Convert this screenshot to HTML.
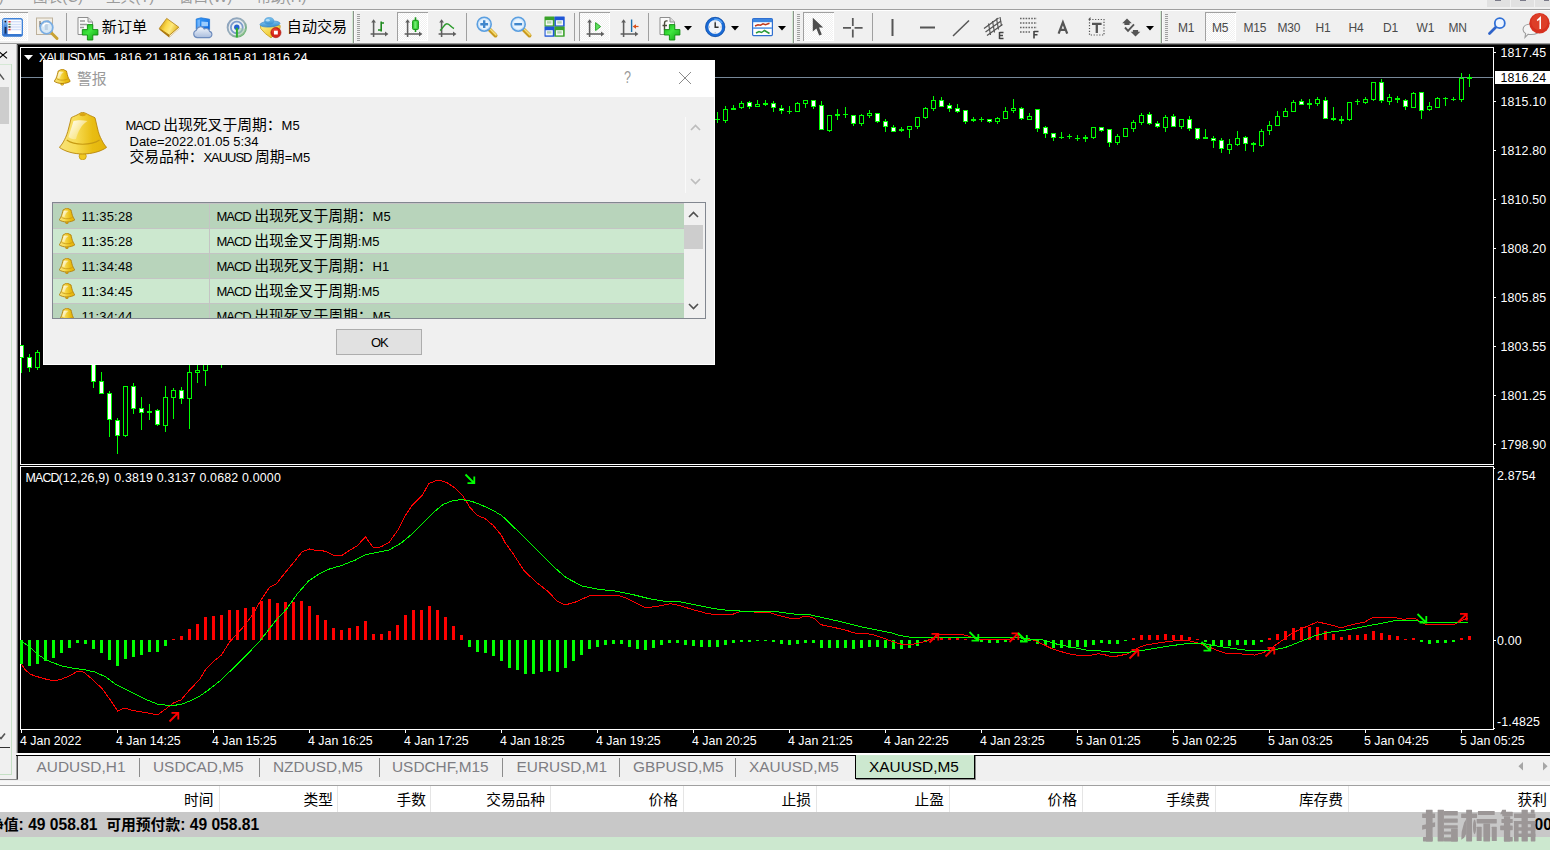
<!DOCTYPE html>
<html lang="zh"><head><meta charset="utf-8"><title>MetaTrader 4 - XAUUSD,M5</title><style>
html,body{margin:0;padding:0;background:#f0f0f0;}
body{width:1550px;height:850px;overflow:hidden;position:relative;font-family:"Liberation Sans","Noto Sans CJK SC",sans-serif;}
#app{position:absolute;left:0;top:0;width:1550px;height:850px;overflow:hidden;}
.r,.a,.t{position:absolute;}
.t{white-space:pre;}
svg{display:block;overflow:visible}
.t svg{display:inline-block;}
</style></head><body><svg width="0" height="0" style="position:absolute"><defs><linearGradient id="pg" x1="0" y1="0" x2="1" y2="1"><stop offset="0" stop-color="#17b317"/><stop offset=".45" stop-color="#3fe63f"/><stop offset="1" stop-color="#0fa00f"/></linearGradient><linearGradient id="bg1" x1="0" x2="1" y1="0" y2="0"><stop offset="0" stop-color="#f8e27a"/><stop offset=".35" stop-color="#f7dc55"/><stop offset=".7" stop-color="#e9bd12"/><stop offset="1" stop-color="#e3b30a"/></linearGradient><linearGradient id="bg2" x1="0" x2="1" y1="0" y2="1"><stop offset="0" stop-color="#fff" stop-opacity=".95"/><stop offset="1" stop-color="#fff" stop-opacity="0"/></linearGradient><symbol id="bell" viewBox="0 0 48 48"><circle cx="23.7" cy="44.2" r="3.6" fill="#f0c820" stroke="#c89a10" stroke-width=".8"/><path d="M23.5 0.4C21.5 0.6 20 2 18 3 16 4 13 5 12.2 5.8 11.5 9 10.5 13 9.7 16 8.5 21 7 25 5.6 27.5 4 31 2 33.5 0.4 35.4 6 39.5 15 42 23.7 42 32.5 42 42 39.5 47.6 35.4 46 33.5 44 31 42.5 27.5 41 25 39.5 21 38.4 16 37.7 13 36.8 9 36 5.8 35 5 32 4 30 3 28 2 26 0.6 23.5 0.4Z" fill="url(#bg1)" stroke="#b8860b" stroke-width=".9"/><path d="M7.7 28C12 31 18 32.2 23.7 32.2 29.5 32.2 36 31 40.6 28" fill="none" stroke="#c79a12" stroke-width="1.1"/><path d="M14.5 9C18 8 24 8 28.5 9 22 13 19 20 17 27 14 28 11 26.5 9.5 25 11 20 13 14 14.5 9Z" fill="url(#bg2)"/><ellipse cx="23.6" cy="2.6" rx="3.2" ry="1.6" fill="#d9a514"/></symbol><symbol id="bells" viewBox="0 0 48 48"><circle cx="23.7" cy="44.2" r="3.6" fill="#f0c820" stroke="#b07c08" stroke-width="2.2"/><path d="M23.5 0.4C21.5 0.6 20 2 18 3 16 4 13 5 12.2 5.8 11.5 9 10.5 13 9.7 16 8.5 21 7 25 5.6 27.5 4 31 2 33.5 0.4 35.4 6 39.5 15 42 23.7 42 32.5 42 42 39.5 47.6 35.4 46 33.5 44 31 42.5 27.5 41 25 39.5 21 38.4 16 37.7 13 36.8 9 36 5.8 35 5 32 4 30 3 28 2 26 0.6 23.5 0.4Z" fill="url(#bg1)" stroke="#b07c08" stroke-width="2.6"/><path d="M7.7 28C12 31 18 32.2 23.7 32.2 29.5 32.2 36 31 40.6 28" fill="none" stroke="#c08c10" stroke-width="2"/><path d="M14.5 9C18 8 24 8 28.5 9 22 13 19 20 17 27 14 28 11 26.5 9.5 25 11 20 13 14 14.5 9Z" fill="url(#bg2)"/><ellipse cx="23.6" cy="2.6" rx="3.2" ry="1.6" fill="#d9a514"/></symbol></defs></svg><div id="app">
<div class="r" style="left:0px;top:0px;width:1550px;height:850px;background:#f0f0f0;"></div>
<div class="t" style="top:-13.2px;font-size:15px;line-height:19px;color:#9b9b9b;left:-10.5px;">(I)</div>
<div class="t" style="top:-13.2px;font-size:15px;line-height:19px;color:#9b9b9b;left:33px;"><span style="font-size:14.6px">图表</span>(C)</div>
<div class="t" style="top:-13.2px;font-size:15px;line-height:19px;color:#9b9b9b;left:106px;"><span style="font-size:14.6px">工具</span>(T)</div>
<div class="t" style="top:-13.2px;font-size:15px;line-height:19px;color:#9b9b9b;left:179px;"><span style="font-size:14.6px">窗口</span>(W)</div>
<div class="t" style="top:-13.2px;font-size:15px;line-height:19px;color:#9b9b9b;left:256.5px;"><span style="font-size:14.6px">帮助</span>(H)</div>
<div class="r" style="left:1487px;top:0px;width:23px;height:7px;background:#e1e1e1;"></div>
<div class="r" style="left:1511px;top:0px;width:23px;height:7px;background:#e1e1e1;"></div>
<div class="r" style="left:1535px;top:0px;width:15px;height:7px;background:#e1e1e1;"></div>
<div class="r" style="left:1495px;top:0px;width:6px;height:1px;background:#7a7a88;"></div>
<div class="r" style="left:1520px;top:0px;width:6px;height:1px;background:#7a7a88;"></div>
<div class="r" style="left:1544px;top:0px;width:5px;height:1px;background:#7a7a88;"></div>
<div class="r" style="left:0px;top:9px;width:1550px;height:1px;background:#a0a0a0;"></div>
<div class="r" style="left:0px;top:10px;width:1550px;height:1px;background:#ffffff;"></div>
<div class="r" style="left:-1px;top:12px;width:29px;height:29px;background:#fafafa;background-image:repeating-conic-gradient(#fff 0 25%,#f0f0f0 0 50%);background-size:2px 2px;box-shadow:inset 1px 1px 0 #a0a0a0, inset -1px -1px 0 #fff;"></div>
<div class="r" style="left:66px;top:13px;width:1px;height:28px;background:#a0a0a0;"></div>
<div class="r" style="left:466px;top:13px;width:1px;height:28px;background:#a0a0a0;"></div>
<div class="r" style="left:574px;top:13px;width:1px;height:28px;background:#a0a0a0;"></div>
<div class="r" style="left:648px;top:13px;width:1px;height:28px;background:#a0a0a0;"></div>
<div class="r" style="left:872px;top:13px;width:1px;height:28px;background:#a0a0a0;"></div>
<div class="r" style="left:352px;top:11px;width:1px;height:32px;background:#cfe8cf;"></div>
<div class="r" style="left:353px;top:11px;width:1px;height:32px;background:#8d938d;"></div>
<div class="r" style="left:354px;top:11px;width:1px;height:32px;background:#fafafa;"></div>
<div class="r" style="left:357px;top:14px;width:3px;height:27px;background:transparent;background-image:repeating-linear-gradient(#a0a0a0 0 1px,transparent 1px 2px);"></div>
<div class="r" style="left:792px;top:11px;width:1px;height:32px;background:#cfe8cf;"></div>
<div class="r" style="left:793px;top:11px;width:1px;height:32px;background:#8d938d;"></div>
<div class="r" style="left:794px;top:11px;width:1px;height:32px;background:#fafafa;"></div>
<div class="r" style="left:797px;top:14px;width:3px;height:27px;background:transparent;background-image:repeating-linear-gradient(#a0a0a0 0 1px,transparent 1px 2px);"></div>
<div class="r" style="left:1160px;top:11px;width:1px;height:32px;background:#cfe8cf;"></div>
<div class="r" style="left:1161px;top:11px;width:1px;height:32px;background:#8d938d;"></div>
<div class="r" style="left:1162px;top:11px;width:1px;height:32px;background:#fafafa;"></div>
<div class="r" style="left:1165px;top:14px;width:3px;height:27px;background:transparent;background-image:repeating-linear-gradient(#a0a0a0 0 1px,transparent 1px 2px);"></div>
<div class="r" style="left:397px;top:12px;width:31px;height:29px;background:#fafafa;background-image:repeating-conic-gradient(#fff 0 25%,#f0f0f0 0 50%);background-size:2px 2px;box-shadow:inset 1px 1px 0 #a0a0a0, inset -1px -1px 0 #fff;"></div>
<div class="r" style="left:579px;top:12px;width:31px;height:29px;background:#fafafa;background-image:repeating-conic-gradient(#fff 0 25%,#f0f0f0 0 50%);background-size:2px 2px;box-shadow:inset 1px 1px 0 #a0a0a0, inset -1px -1px 0 #fff;"></div>
<div class="r" style="left:803px;top:12px;width:31px;height:29px;background:#fafafa;background-image:repeating-conic-gradient(#fff 0 25%,#f0f0f0 0 50%);background-size:2px 2px;box-shadow:inset 1px 1px 0 #a0a0a0, inset -1px -1px 0 #fff;"></div>
<div class="r" style="left:1205px;top:12px;width:31px;height:29px;background:#fafafa;background-image:repeating-conic-gradient(#fff 0 25%,#f0f0f0 0 50%);background-size:2px 2px;box-shadow:inset 1px 1px 0 #a0a0a0, inset -1px -1px 0 #fff;"></div>
<svg class="a" style="left:684px;top:26px" width="8" height="5"><path d="M0 0H8L4 4.5Z" fill="#000"/></svg>
<svg class="a" style="left:731px;top:26px" width="8" height="5"><path d="M0 0H8L4 4.5Z" fill="#000"/></svg>
<svg class="a" style="left:778px;top:26px" width="8" height="5"><path d="M0 0H8L4 4.5Z" fill="#000"/></svg>
<svg class="a" style="left:1145.5px;top:26px" width="8" height="5"><path d="M0 0H8L4 4.5Z" fill="#000"/></svg>
<div class="t" style="top:17px;font-size:15px;line-height:19px;color:#000;left:101.8px;"><span style="font-size:15.1px">新订单</span></div>
<div class="t" style="top:16.8px;font-size:15px;line-height:19px;color:#000;left:286.8px;"><span style="font-size:15.1px">自动交易</span></div>
<div class="a" style="left:2px;top:17.6px"><svg width="21" height="19" viewBox="0 0 21 19" ><defs><linearGradient id="mwg" x1="0" y1="0" x2="0" y2="1"><stop offset="0" stop-color="#a9cdf8"/><stop offset=".5" stop-color="#3d82dc"/><stop offset="1" stop-color="#2a67c8"/></linearGradient></defs><rect x=".7" y=".7" width="19.6" height="17.4" rx="1.8" fill="#fff" stroke="#3f82d8" stroke-width="1.4"/><rect x="1" y="16" width="19" height="2.2" rx="1" fill="#3576cf"/><rect x="1.4" y="1.4" width="4.2" height="15.6" fill="url(#mwg)"/><rect x="2.7" y="9" width="1.7" height="6.5" fill="#1a2f55"/><path d="M8.5 3.8H19.5M8.5 6.4H19.5M8.5 9H19.5M8.5 11.6H19.5" stroke="#d3e0f9" stroke-width="1.5"/><rect x="6.4" y="3" width="2.2" height="1.5" fill="#e33"/><rect x="6.4" y="5.6" width="2.2" height="1.5" fill="#4a8a4a"/><rect x="6.4" y="8.2" width="2.2" height="1.5" fill="#333"/><rect x="6.4" y="10.8" width="2.2" height="1.5" fill="#e33"/><circle cx="3.4" cy="3.6" r=".9" fill="#111"/></svg></div>
<div class="a" style="left:36px;top:17px"><svg width="23" height="23" viewBox="0 0 23 23" ><rect x=".5" y="1" width="16" height="16.5" fill="#f3efe6" stroke="#bdb19c"/><path d="M4 4V10M4 6.5H7.5M12 3.5V8M9 5H12" stroke="#666" stroke-width="1.1"/><rect x="8.8" y="7" width="3" height="6" fill="#8e99a8"/><path d="M15.5 16L21 21.5" stroke="#c9a233" stroke-width="3" stroke-linecap="round"/><circle cx="10.5" cy="10.5" r="6.3" fill="#cfe6fb" fill-opacity=".72" stroke="#7aaee4" stroke-width="1.8"/><path d="M7 9.5a4 4 0 0 1 6 -2.5" stroke="#fff" stroke-width="1.4" fill="none"/></svg></div>
<div class="a" style="left:77px;top:17px"><svg width="21" height="23" viewBox="0 0 21 23" ><path d="M1 .5H11L15.5 5V17.5H1Z" fill="#fafafa" stroke="#8e8e8e"/><path d="M11 .5V5H15.5" fill="#ddd" stroke="#8e8e8e"/><path d="M3 4H8M3 7.5H10M3 10.5H7" stroke="#9a9a9a" stroke-width="1.4"/><path d="M10.4 7.6H15.8V12.6H20.9V18H15.8V23H10.4V18H5.3V12.6H10.4Z" fill="url(#pg)" stroke="#0d8a0d" stroke-width=".9"/></svg></div>
<div class="a" style="left:159px;top:18px"><svg width="22" height="21" viewBox="0 0 22 21" ><defs><linearGradient id="bk" x1="0" y1="0.3" x2="1" y2="0.7"><stop offset="0" stop-color="#c8920c"/><stop offset=".35" stop-color="#fbd94a"/><stop offset=".6" stop-color="#fde97e"/><stop offset="1" stop-color="#dba914"/></linearGradient></defs><path d="M.2 11.6L10.2 19.4 20.4 10.6 19.6 9.2 10.4 16.6 1.2 10Z" fill="#a8740c"/><path d="M10.4 16.8L19.7 9.2 20.3 10.7 10.4 19.2Z" fill="#f4ead0"/><path d="M7.7 .4L19.8 9.2 10.5 17.2 .3 10.4Z" fill="url(#bk)" stroke="#b07d0e" stroke-width=".8"/></svg></div>
<div class="a" style="left:192px;top:16.6px"><svg width="22" height="22" viewBox="0 0 22 22" ><defs><linearGradient id="cl" x1="0" y1="0" x2="0" y2="1"><stop offset="0" stop-color="#f4f7fc"/><stop offset="1" stop-color="#a9bddd"/></linearGradient><linearGradient id="cb" x1="0" y1="0" x2="1" y2="1"><stop offset="0" stop-color="#38a0ff"/><stop offset="1" stop-color="#0d63d8"/></linearGradient></defs><path d="M4.2 2L9 .8 17.6 2.2V12.5H4.2Z" fill="url(#cb)" stroke="#1a6fd0" stroke-width=".7"/><path d="M9.4 4.4L16 5V9.2H9.4Z" fill="#a8d4ff" opacity=".9"/><path d="M5.4 3.2L8 2.6V12H5.4Z" fill="#8fc4ff" opacity=".7"/><path d="M5 20.6a3.8 3.8 0 0 1 -.6 -7.4a4.2 4.2 0 0 1 7.8 -1.2a3.6 3.6 0 0 1 5.4 2.4a3.2 3.2 0 0 1 -.2 6.2Z" fill="url(#cl)" stroke="#6e8cbd" stroke-width="1.1"/></svg></div>
<div class="a" style="left:226px;top:16.6px"><svg width="22" height="22" viewBox="0 0 22 22" ><defs><linearGradient id="rd" x1="0" y1="0" x2="1" y2="1"><stop offset="0" stop-color="#8aa0c0"/><stop offset=".55" stop-color="#9ab0b8"/><stop offset="1" stop-color="#4fb04f"/></linearGradient></defs><circle cx="10.8" cy="10.5" r="9.2" fill="#e6eaee" stroke="url(#rd)" stroke-width="1.9"/><circle cx="10.8" cy="10.5" r="5.9" fill="#eef1f4" stroke="#7d9ccc" stroke-width="1.8"/><path d="M10.8 10.5V20.2A9.6 9.6 0 0 0 20.2 12Z" fill="#9fc9a0" opacity=".55"/><circle cx="10.8" cy="10.2" r="2.7" fill="#2463d0"/><path d="M10.9 10.8V20.4" stroke="#2fae2f" stroke-width="2"/></svg></div>
<div class="a" style="left:259px;top:16.5px"><svg width="23" height="22" viewBox="0 0 23 22" ><defs><linearGradient id="ah" x1="0" y1="0" x2="0" y2="1"><stop offset="0" stop-color="#7cc4ee"/><stop offset="1" stop-color="#3a8fd0"/></linearGradient><linearGradient id="ay" x1="0" y1="0" x2="1" y2="1"><stop offset="0" stop-color="#fdf08e"/><stop offset=".6" stop-color="#f2cf3c"/><stop offset="1" stop-color="#d9a514"/></linearGradient></defs><path d="M1.4 8.6L1.8 11.6Q6 17.2 12 20.8Q17.4 17 21 11.2L21.2 8.6Z" fill="url(#ay)" stroke="#c79c18" stroke-width=".8"/><ellipse cx="11" cy="7" rx="10" ry="3" fill="url(#ah)" stroke="#3d88c8" stroke-width=".7" transform="rotate(-4 11 7)"/><ellipse cx="10.2" cy="4" rx="4.6" ry="3.5" fill="url(#ah)" stroke="#4a97d6" stroke-width=".6"/><ellipse cx="8.8" cy="3.2" rx="2" ry="1.2" fill="#c9e8fb" opacity=".8"/><circle cx="16.9" cy="15.6" r="5.1" fill="#d4241a"/><circle cx="16.9" cy="15.6" r="5.1" fill="none" stroke="#a8160e" stroke-width=".6"/><circle cx="16" cy="14.2" r="3" fill="#f0503a" opacity=".6"/><rect x="15" y="13.7" width="3.8" height="3.8" fill="#fff"/></svg></div>
<div class="a" style="left:370px;top:19px"><svg width="19" height="19" viewBox="0 0 19 19" ><path d="M3.6 2V18M0.6 15H17" stroke="#5e5e5e" stroke-width="1.55" fill="none"/><path d="M3.6 0.3L6 3.6H1.2ZM18.4 15L15 12.6V17.4Z" fill="#5e5e5e"/><path d="M11.2 2.5V12.5M11.2 4H14M8 11H11.2" stroke="#1d8a1d" stroke-width="1.6" fill="none"/></svg></div>
<div class="a" style="left:404px;top:17px"><svg width="19" height="21" viewBox="0 0 19 21" ><g transform="translate(0 2)"><path d="M3.6 2V18M0.6 15H17" stroke="#5e5e5e" stroke-width="1.55" fill="none"/><path d="M3.6 0.3L6 3.6H1.2ZM18.4 15L15 12.6V17.4Z" fill="#5e5e5e"/></g><path d="M11.5 .3V15" stroke="#1a961a" stroke-width="1.6"/><rect x="8.6" y="3.3" width="5.8" height="9.2" rx="1" fill="#39d039" stroke="#1a961a" stroke-width="1"/><rect x="10.3" y="4.5" width="2.2" height="6.8" fill="#7ff07f" opacity=".8"/></svg></div>
<div class="a" style="left:438px;top:19px"><svg width="19" height="19" viewBox="0 0 19 19" ><path d="M3.6 2V18M0.6 15H17" stroke="#5e5e5e" stroke-width="1.55" fill="none"/><path d="M3.6 0.3L6 3.6H1.2ZM18.4 15L15 12.6V17.4Z" fill="#5e5e5e"/><path d="M2 11.5C5 9.5 6.5 4.5 9 4.8 11.5 5 13.5 8.5 16 9.5" stroke="#2a9a2a" stroke-width="1.5" fill="none"/></svg></div>
<div class="a" style="left:476px;top:16px"><svg width="22" height="22" viewBox="0 0 22 22" ><path d="M13.5 13.5L19.5 19.5" stroke="#c99a1e" stroke-width="4" stroke-linecap="round"/><path d="M14.3 13.2L20 18.9" stroke="#f6de78" stroke-width="1.5" stroke-linecap="round"/><circle cx="8.2" cy="8.2" r="7" fill="#cfe4f8" stroke="#5b9fe0" stroke-width="1.6"/><circle cx="8.2" cy="8.2" r="5" fill="#e9f5ff"/><path d="M4.3 8.2H12.1M8.2 4.3V12.1" stroke="#3f86cc" stroke-width="2.4"/></svg></div>
<div class="a" style="left:510px;top:16px"><svg width="22" height="22" viewBox="0 0 22 22" ><path d="M13.5 13.5L19.5 19.5" stroke="#c99a1e" stroke-width="4" stroke-linecap="round"/><path d="M14.3 13.2L20 18.9" stroke="#f6de78" stroke-width="1.5" stroke-linecap="round"/><circle cx="8.2" cy="8.2" r="7" fill="#cfe4f8" stroke="#5b9fe0" stroke-width="1.6"/><circle cx="8.2" cy="8.2" r="5" fill="#e9f5ff"/><path d="M4.3 8.2H12.1" stroke="#3f86cc" stroke-width="2.4"/></svg></div>
<div class="a" style="left:544px;top:16px"><svg width="22" height="22" viewBox="0 0 22 22" ><rect x=".5" y=".5" width="10.2" height="10.2" rx=".4" fill="#3aa22a"/><rect x="10.5" y=".5" width="10.2" height="10.2" rx=".4" fill="#1f56d6"/><rect x=".5" y="10.5" width="10.2" height="10.2" rx=".4" fill="#1f56d6"/><rect x="10.5" y="10.5" width="10.2" height="10.2" rx=".4" fill="#3aa22a"/><rect x="1.6" y="4.2" width="7.2" height="5.2" fill="#fff" opacity=".95"/><rect x="3" y="5.2" width="4.4" height="2.4" fill="#9fc79a" opacity=".75"/><rect x="11.9" y="4.2" width="7.2" height="5.2" fill="#fff" opacity=".95"/><rect x="13.3" y="5.2" width="4.4" height="2.4" fill="#9fc79a" opacity=".75"/><rect x="1.6" y="14.2" width="7.2" height="5.2" fill="#fff" opacity=".95"/><rect x="3" y="15.2" width="4.4" height="2.4" fill="#9fc79a" opacity=".75"/><rect x="11.9" y="14.2" width="7.2" height="5.2" fill="#fff" opacity=".95"/><rect x="13.3" y="15.2" width="4.4" height="2.4" fill="#9fc79a" opacity=".75"/></svg></div>
<div class="a" style="left:586px;top:19px"><svg width="19" height="19" viewBox="0 0 19 19" ><path d="M3.6 2V18M0.6 15H17" stroke="#5e5e5e" stroke-width="1.55" fill="none"/><path d="M3.6 0.3L6 3.6H1.2ZM18.4 15L15 12.6V17.4Z" fill="#5e5e5e"/><path d="M9.6 3.6L14.6 7.6 9.6 11.6Z" fill="#5fe05f" stroke="#1e9e1e" stroke-width=".9"/></svg></div>
<div class="a" style="left:620px;top:19px"><svg width="19" height="19" viewBox="0 0 19 19" ><path d="M3.6 2V18M0.6 15H17" stroke="#5e5e5e" stroke-width="1.55" fill="none"/><path d="M3.6 0.3L6 3.6H1.2ZM18.4 15L15 12.6V17.4Z" fill="#5e5e5e"/><path d="M11.6 .5V13" stroke="#1d6fa8" stroke-width="1.4"/><path d="M12.6 7.5L16 5.2V9.8Z" fill="#d8501a"/><path d="M15 7.5H18.5" stroke="#d8501a" stroke-width="1.2"/></svg></div>
<div class="a" style="left:659px;top:17px"><svg width="22" height="23" viewBox="0 0 22 23" ><path d="M1 .5H11L15.5 5V17.5H1Z" fill="#fafafa" stroke="#8e8e8e"/><path d="M11 .5V5H15.5" fill="#ddd" stroke="#8e8e8e"/><path d="M8.5 4C6.5 3.5 5.5 4.5 5.5 6.5V13M3.5 8.5H8" stroke="#4a4a3a" stroke-width="1.4" fill="none"/><path d="M10.4 7.6H15.8V12.6H20.9V18H15.8V23H10.4V18H5.3V12.6H10.4Z" fill="url(#pg)" stroke="#0d8a0d" stroke-width=".9"/></svg></div>
<div class="a" style="left:705px;top:16px"><svg width="22" height="22" viewBox="0 0 22 22" ><circle cx="10.2" cy="11" r="8.4" fill="#f1f4f9" stroke="#1a6bd6" stroke-width="3"/><circle cx="10.2" cy="11" r="9.7" fill="none" stroke="#114a9e" stroke-width=".7"/><path d="M9.2 3.3A8 8 0 0 1 17 7" stroke="#5aa5f5" stroke-width="1.4" fill="none"/><path d="M10.2 6.2V11.2H13.6" stroke="#333" stroke-width="1.5" fill="none"/><path d="M10.2 4.6v1M10.2 16.4v1M3.8 11h1M15.6 11h1" stroke="#7f93ad" stroke-width="1"/></svg></div>
<div class="a" style="left:752px;top:18px"><svg width="22" height="19" viewBox="0 0 22 19" ><rect x=".6" y=".6" width="19.8" height="17" rx="1" fill="#fff" stroke="#2f6fd0" stroke-width="1.2"/><rect x="1" y="1" width="19" height="3.2" fill="#3d86e0"/><rect x="1" y="9.2" width="19" height="1.8" fill="#6aa3ea"/><path d="M3 8L6 6.8 8.5 7.2 11 5.8 13.5 6.8 17.5 5.3" stroke="#c0391b" stroke-width="1.5" fill="none"/><path d="M4 15L7 13.5 9.5 14.5 12.5 12.5 15 14 17.5 15.5" stroke="#2c9b3a" stroke-width="1.5" fill="none"/></svg></div>
<div class="a" style="left:812px;top:17px"><svg width="12" height="20" viewBox="0 0 12 20" ><path d="M.8 .8V14.6L4.4 11.6 7.2 18.6 9.8 17.4 7 10.6H11.2Z" fill="#4d4d4d"/></svg></div>
<div class="a" style="left:843px;top:18px"><svg width="20" height="20" viewBox="0 0 20 20" ><path d="M9.8 0V8M9.8 11.6V19.4M0 9.8H8M11.6 9.8H19.6" stroke="#595959" stroke-width="1.75"/></svg></div>
<div class="a" style="left:891px;top:19px"><svg width="3" height="17" viewBox="0 0 3 17" ><rect x=".5" y="0" width="2" height="17" fill="#555"/></svg></div>
<div class="a" style="left:920px;top:26px"><svg width="15" height="3" viewBox="0 0 15 3" ><rect x="0" y=".5" width="15" height="2" fill="#555"/></svg></div>
<div class="a" style="left:952px;top:19px"><svg width="18" height="18" viewBox="0 0 18 18" ><path d="M1 17L17 1.5" stroke="#555" stroke-width="1.5"/></svg></div>
<div class="a" style="left:984px;top:17px"><svg width="22" height="23" viewBox="0 0 22 23" ><path d="M0 11.5L14.5 1M1.5 15L17 4M3 18.5L18.5 7.5" stroke="#555" stroke-width="1.3"/><path d="M4.5 6.5L6.5 18M8.5 4L10.5 15.5M12.5 1.5L14.5 12.5M16 0L17.5 9" stroke="#555" stroke-width="1.2"/><path d="M15.5 15.5H19.5M15.5 18.5H19M15.5 21.5H19.5M15.5 15V22" stroke="#444" stroke-width="1.5" fill="none"/></svg></div>
<div class="a" style="left:1020px;top:17px"><svg width="20" height="22" viewBox="0 0 20 22" ><path d="M0 1.5H17M0 6H17M0 10.5H17M0 15H11" stroke="#666" stroke-width="1.6" stroke-dasharray="1.6 1.2"/><path d="M14 14.5H18.5M14 17.8H17.5M14 14V21.5" stroke="#444" stroke-width="1.6" fill="none"/></svg></div>
<div class="a" style="left:1057px;top:20px"><svg width="12" height="14" viewBox="0 0 12 14" ><path d="M1.6 13.6L5.9 2.4L10.2 13.6M3.4 9.8H8.4" stroke="#555" stroke-width="2.2" fill="none" stroke-linejoin="miter"/></svg></div>
<div class="a" style="left:1088px;top:17px"><svg width="18" height="20" viewBox="0 0 18 20" ><rect x="1.5" y="2.5" width="14.5" height="15.5" fill="none" stroke="#555" stroke-width="1.2" stroke-dasharray="1.2 1.6"/><path d="M0 2.5L2.5 0V2.5Z" fill="#555"/><path d="M4 6.8H13.6M8.8 6.8V16" stroke="#555" stroke-width="2.3"/></svg></div>
<div class="a" style="left:1122px;top:19px"><svg width="19" height="18" viewBox="0 0 19 18" ><path d="M5 -.5L9.8 4.2H7.6V6H2.4V4.2H.2Z" fill="#555"/><path d="M13.5 17.5L18.3 12.8H16.1V11H10.9V12.8H8.7Z" fill="#555"/><path d="M3 8.5L6 11.8 12 5.4" stroke="#555" stroke-width="1.9" fill="none"/></svg></div>
<div class="a" style="left:1488px;top:17px"><svg width="19" height="19" viewBox="0 0 19 19" ><path d="M1.5 16.5L8 10" stroke="#2f63c9" stroke-width="2.8" stroke-linecap="round"/><circle cx="11.8" cy="6.2" r="5" fill="#eef5ff" stroke="#2f6fd6" stroke-width="1.8"/></svg></div>
<div class="a" style="left:1521px;top:13px"><svg width="30" height="26" viewBox="0 0 30 26" ><path d="M2 16.5C2 13 5.5 11 10 11 14.5 11 18 13 18 16.5 18 20 14.5 21.5 10 21.5 9 21.5 8 21.4 7.2 21.2L4 24.5 4.6 20.4C3 19.5 2 18.2 2 16.5Z" fill="#f4f4f4" stroke="#9d9d9d" stroke-width="1.1"/><circle cx="18.5" cy="10.3" r="10.2" fill="#d6301f"/><circle cx="18.5" cy="9" r="8.2" fill="#e34a30" opacity=".55"/><path d="M16.2 7.6L19.2 4.8V16" stroke="#fff" stroke-width="1.5" fill="none"/></svg></div>
<div class="t" style="top:20px;font-size:12px;line-height:16px;color:#4a4a4a;left:1178px;letter-spacing:-0.2px;">M1</div>
<div class="t" style="top:20px;font-size:12px;line-height:16px;color:#4a4a4a;left:1212px;letter-spacing:-0.2px;">M5</div>
<div class="t" style="top:20px;font-size:12px;line-height:16px;color:#4a4a4a;left:1243.5px;letter-spacing:-0.2px;">M15</div>
<div class="t" style="top:20px;font-size:12px;line-height:16px;color:#4a4a4a;left:1277.5px;letter-spacing:-0.2px;">M30</div>
<div class="t" style="top:20px;font-size:12px;line-height:16px;color:#4a4a4a;left:1315.5px;letter-spacing:-0.2px;">H1</div>
<div class="t" style="top:20px;font-size:12px;line-height:16px;color:#4a4a4a;left:1348.5px;letter-spacing:-0.2px;">H4</div>
<div class="t" style="top:20px;font-size:12px;line-height:16px;color:#4a4a4a;left:1383px;letter-spacing:-0.2px;">D1</div>
<div class="t" style="top:20px;font-size:12px;line-height:16px;color:#4a4a4a;left:1416.5px;letter-spacing:-0.2px;">W1</div>
<div class="t" style="top:20px;font-size:12px;line-height:16px;color:#4a4a4a;left:1448.5px;letter-spacing:-0.2px;">MN</div>
<div class="r" style="left:0px;top:44px;width:17px;height:736px;background:#f0f0f0;"></div>
<div class="r" style="left:11px;top:64px;width:1px;height:711px;background:#c5e0c5;"></div>
<div class="r" style="left:0px;top:64px;width:11px;height:1px;background:#d5e8d5;"></div>
<div class="r" style="left:0px;top:774px;width:12px;height:1px;background:#c5e0c5;"></div>
<div class="r" style="left:0px;top:87px;width:9px;height:37px;background:#cdcdcd;"></div>
<svg class="a" style="left:0;top:50px" width="12" height="12"><path d="M-1.2 1.6L7 8.4M7 1.6L-1.2 8.4" stroke="#000" stroke-width="1.2"/></svg>
<svg class="a" style="left:0;top:72px" width="6" height="10"><path d="M-6 7L-.6 1.8L4 7.6" stroke="#555" stroke-width="1.5" fill="none"/></svg>
<svg class="a" style="left:0;top:732px" width="6" height="8"><path d="M-3 3L1 6.5L5 1.5" stroke="#555" stroke-width="1.6" fill="none"/></svg>
<div class="r" style="left:0px;top:747px;width:10px;height:1px;background:#333;"></div>
<div class="r" style="left:0px;top:779px;width:18px;height:1px;background:#8c8c8c;"></div>
<div class="r" style="left:16px;top:44px;width:1px;height:709px;background:#c0c0c0;"></div>
<div class="r" style="left:16px;top:756px;width:1px;height:23px;background:#a0a0a0;"></div>
<div class="r" style="left:17px;top:44px;width:1px;height:709px;background:#6a6a6a;"></div>
<div class="r" style="left:18px;top:45px;width:1532px;height:708px;background:#000;"></div>
<div class="r" style="left:0px;top:43px;width:1550px;height:1px;background:#9a9a9a;"></div>
<div class="r" style="left:17px;top:44px;width:1533px;height:1px;background:#3c3c3c;"></div>
<svg class="a" style="left:0;top:0" width="1550" height="850" shape-rendering="crispEdges"><rect x="20" y="47" width="1474" height="1" fill="#fff"/><rect x="20" y="47" width="1" height="418" fill="#fff"/><rect x="1493" y="47" width="1" height="418" fill="#fff"/><rect x="20" y="464" width="1474" height="1" fill="#fff"/><rect x="20" y="466" width="1474" height="1" fill="#fff"/><rect x="20" y="466" width="1" height="264" fill="#fff"/><rect x="1493" y="466" width="1" height="264" fill="#fff"/><rect x="20" y="729" width="1474" height="1" fill="#fff"/><rect x="21" y="77" width="1472" height="1" fill="#778899"/><rect x="1494" y="52" width="2" height="1" fill="#fff"/><rect x="1494" y="101" width="2" height="1" fill="#fff"/><rect x="1494" y="150" width="2" height="1" fill="#fff"/><rect x="1494" y="199" width="2" height="1" fill="#fff"/><rect x="1494" y="248" width="2" height="1" fill="#fff"/><rect x="1494" y="297" width="2" height="1" fill="#fff"/><rect x="1494" y="346" width="2" height="1" fill="#fff"/><rect x="1494" y="395" width="2" height="1" fill="#fff"/><rect x="1494" y="444" width="2" height="1" fill="#fff"/><rect x="1494" y="468" width="1" height="1" fill="#fff"/><rect x="1494" y="640" width="2" height="1" fill="#fff"/><rect x="1494" y="728" width="1" height="1" fill="#fff"/><rect x="21" y="730" width="1" height="3" fill="#fff"/><rect x="117" y="730" width="1" height="3" fill="#fff"/><rect x="213" y="730" width="1" height="3" fill="#fff"/><rect x="309" y="730" width="1" height="3" fill="#fff"/><rect x="405" y="730" width="1" height="3" fill="#fff"/><rect x="501" y="730" width="1" height="3" fill="#fff"/><rect x="597" y="730" width="1" height="3" fill="#fff"/><rect x="693" y="730" width="1" height="3" fill="#fff"/><rect x="789" y="730" width="1" height="3" fill="#fff"/><rect x="885" y="730" width="1" height="3" fill="#fff"/><rect x="981" y="730" width="1" height="3" fill="#fff"/><rect x="1077" y="730" width="1" height="3" fill="#fff"/><rect x="1173" y="730" width="1" height="3" fill="#fff"/><rect x="1269" y="730" width="1" height="3" fill="#fff"/><rect x="1365" y="730" width="1" height="3" fill="#fff"/><rect x="1461" y="730" width="1" height="3" fill="#fff"/><rect x="21" y="345" width="1" height="28" fill="#00ff00"/><rect x="19" y="345" width="5" height="13" fill="#00ff00"/><rect x="20" y="346" width="3" height="11" fill="#fff"/><rect x="29" y="354" width="1" height="18" fill="#00ff00"/><rect x="27" y="357" width="5" height="11" fill="#00ff00"/><rect x="28" y="358" width="3" height="9" fill="#fff"/><rect x="37" y="350" width="1" height="20" fill="#00ff00"/><rect x="35" y="352" width="5" height="16" fill="#00ff00"/><rect x="36" y="353" width="3" height="14" fill="#000"/><rect x="93" y="340" width="1" height="48" fill="#00ff00"/><rect x="91" y="340" width="5" height="42" fill="#00ff00"/><rect x="92" y="341" width="3" height="40" fill="#fff"/><rect x="101" y="372" width="1" height="22" fill="#00ff00"/><rect x="99" y="381" width="5" height="13" fill="#00ff00"/><rect x="100" y="382" width="3" height="11" fill="#fff"/><rect x="109" y="391" width="1" height="46" fill="#00ff00"/><rect x="107" y="393" width="5" height="27" fill="#00ff00"/><rect x="108" y="394" width="3" height="25" fill="#fff"/><rect x="117" y="418" width="1" height="36" fill="#00ff00"/><rect x="115" y="420" width="5" height="16" fill="#00ff00"/><rect x="116" y="421" width="3" height="14" fill="#fff"/><rect x="125" y="386" width="1" height="51" fill="#00ff00"/><rect x="123" y="386" width="5" height="50" fill="#00ff00"/><rect x="124" y="387" width="3" height="48" fill="#000"/><rect x="133" y="383" width="1" height="31" fill="#00ff00"/><rect x="131" y="386" width="5" height="23" fill="#00ff00"/><rect x="132" y="387" width="3" height="21" fill="#fff"/><rect x="141" y="397" width="1" height="33" fill="#00ff00"/><rect x="139" y="408" width="5" height="5" fill="#00ff00"/><rect x="140" y="409" width="3" height="3" fill="#fff"/><rect x="149" y="404" width="1" height="16" fill="#00ff00"/><rect x="147" y="411" width="5" height="2" fill="#00ff00"/><rect x="157" y="409" width="1" height="17" fill="#00ff00"/><rect x="155" y="410" width="5" height="15" fill="#00ff00"/><rect x="156" y="411" width="3" height="13" fill="#fff"/><rect x="165" y="386" width="1" height="46" fill="#00ff00"/><rect x="163" y="397" width="5" height="29" fill="#00ff00"/><rect x="164" y="398" width="3" height="27" fill="#000"/><rect x="173" y="388" width="1" height="31" fill="#00ff00"/><rect x="171" y="390" width="5" height="8" fill="#00ff00"/><rect x="172" y="391" width="3" height="6" fill="#000"/><rect x="181" y="387" width="1" height="17" fill="#00ff00"/><rect x="179" y="390" width="5" height="9" fill="#00ff00"/><rect x="180" y="391" width="3" height="7" fill="#fff"/><rect x="189" y="350" width="1" height="79" fill="#00ff00"/><rect x="187" y="372" width="5" height="27" fill="#00ff00"/><rect x="188" y="373" width="3" height="25" fill="#000"/><rect x="197" y="350" width="1" height="33" fill="#00ff00"/><rect x="195" y="370" width="5" height="3" fill="#00ff00"/><rect x="196" y="371" width="3" height="1" fill="#000"/><rect x="205" y="350" width="1" height="36" fill="#00ff00"/><rect x="203" y="350" width="5" height="21" fill="#00ff00"/><rect x="204" y="351" width="3" height="19" fill="#000"/><rect x="221" y="350" width="1" height="18" fill="#00ff00"/><rect x="219" y="350" width="5" height="10" fill="#00ff00"/><rect x="220" y="351" width="3" height="8" fill="#000"/><rect x="717" y="112" width="1" height="11" fill="#00ff00"/><rect x="715" y="119" width="5" height="1" fill="#00ff00"/><rect x="725" y="106" width="1" height="17" fill="#00ff00"/><rect x="723" y="109" width="5" height="12" fill="#00ff00"/><rect x="724" y="110" width="3" height="10" fill="#000"/><rect x="733" y="105" width="1" height="5" fill="#00ff00"/><rect x="731" y="108" width="5" height="2" fill="#00ff00"/><rect x="741" y="101" width="1" height="8" fill="#00ff00"/><rect x="739" y="103" width="5" height="5" fill="#00ff00"/><rect x="740" y="104" width="3" height="3" fill="#000"/><rect x="749" y="101" width="1" height="8" fill="#00ff00"/><rect x="747" y="102" width="5" height="5" fill="#00ff00"/><rect x="748" y="103" width="3" height="3" fill="#fff"/><rect x="757" y="100" width="1" height="7" fill="#00ff00"/><rect x="755" y="104" width="5" height="3" fill="#00ff00"/><rect x="756" y="105" width="3" height="1" fill="#000"/><rect x="765" y="100" width="1" height="6" fill="#00ff00"/><rect x="763" y="103" width="5" height="2" fill="#00ff00"/><rect x="773" y="101" width="1" height="11" fill="#00ff00"/><rect x="771" y="103" width="5" height="5" fill="#00ff00"/><rect x="772" y="104" width="3" height="3" fill="#fff"/><rect x="781" y="105" width="1" height="9" fill="#00ff00"/><rect x="779" y="108" width="5" height="3" fill="#00ff00"/><rect x="780" y="109" width="3" height="1" fill="#fff"/><rect x="789" y="106" width="1" height="8" fill="#00ff00"/><rect x="787" y="111" width="5" height="1" fill="#00ff00"/><rect x="797" y="102" width="1" height="10" fill="#00ff00"/><rect x="795" y="103" width="5" height="9" fill="#00ff00"/><rect x="796" y="104" width="3" height="7" fill="#000"/><rect x="805" y="100" width="1" height="8" fill="#00ff00"/><rect x="803" y="100" width="5" height="4" fill="#00ff00"/><rect x="804" y="101" width="3" height="2" fill="#000"/><rect x="813" y="100" width="1" height="9" fill="#00ff00"/><rect x="811" y="100" width="5" height="7" fill="#00ff00"/><rect x="812" y="101" width="3" height="5" fill="#fff"/><rect x="821" y="101" width="1" height="29" fill="#00ff00"/><rect x="819" y="105" width="5" height="25" fill="#00ff00"/><rect x="820" y="106" width="3" height="23" fill="#fff"/><rect x="829" y="115" width="1" height="17" fill="#00ff00"/><rect x="827" y="115" width="5" height="16" fill="#00ff00"/><rect x="828" y="116" width="3" height="14" fill="#000"/><rect x="837" y="109" width="1" height="11" fill="#00ff00"/><rect x="835" y="114" width="5" height="2" fill="#00ff00"/><rect x="845" y="107" width="1" height="11" fill="#00ff00"/><rect x="843" y="114" width="5" height="1" fill="#00ff00"/><rect x="853" y="115" width="1" height="11" fill="#00ff00"/><rect x="851" y="115" width="5" height="9" fill="#00ff00"/><rect x="852" y="116" width="3" height="7" fill="#fff"/><rect x="861" y="114" width="1" height="12" fill="#00ff00"/><rect x="859" y="115" width="5" height="9" fill="#00ff00"/><rect x="860" y="116" width="3" height="7" fill="#000"/><rect x="869" y="110" width="1" height="8" fill="#00ff00"/><rect x="867" y="113" width="5" height="3" fill="#00ff00"/><rect x="868" y="114" width="3" height="1" fill="#000"/><rect x="877" y="113" width="1" height="10" fill="#00ff00"/><rect x="875" y="113" width="5" height="9" fill="#00ff00"/><rect x="876" y="114" width="3" height="7" fill="#fff"/><rect x="885" y="119" width="1" height="13" fill="#00ff00"/><rect x="883" y="121" width="5" height="6" fill="#00ff00"/><rect x="884" y="122" width="3" height="4" fill="#fff"/><rect x="893" y="125" width="1" height="7" fill="#00ff00"/><rect x="891" y="127" width="5" height="5" fill="#00ff00"/><rect x="892" y="128" width="3" height="3" fill="#fff"/><rect x="901" y="127" width="1" height="5" fill="#00ff00"/><rect x="899" y="129" width="5" height="2" fill="#00ff00"/><rect x="909" y="126" width="1" height="12" fill="#00ff00"/><rect x="907" y="126" width="5" height="4" fill="#00ff00"/><rect x="908" y="127" width="3" height="2" fill="#000"/><rect x="917" y="117" width="1" height="12" fill="#00ff00"/><rect x="915" y="117" width="5" height="10" fill="#00ff00"/><rect x="916" y="118" width="3" height="8" fill="#000"/><rect x="925" y="107" width="1" height="12" fill="#00ff00"/><rect x="923" y="108" width="5" height="10" fill="#00ff00"/><rect x="924" y="109" width="3" height="8" fill="#000"/><rect x="933" y="96" width="1" height="15" fill="#00ff00"/><rect x="931" y="100" width="5" height="9" fill="#00ff00"/><rect x="932" y="101" width="3" height="7" fill="#000"/><rect x="941" y="97" width="1" height="10" fill="#00ff00"/><rect x="939" y="100" width="5" height="7" fill="#00ff00"/><rect x="940" y="101" width="3" height="5" fill="#fff"/><rect x="949" y="103" width="1" height="9" fill="#00ff00"/><rect x="947" y="105" width="5" height="4" fill="#00ff00"/><rect x="948" y="106" width="3" height="2" fill="#fff"/><rect x="957" y="104" width="1" height="9" fill="#00ff00"/><rect x="955" y="108" width="5" height="4" fill="#00ff00"/><rect x="956" y="109" width="3" height="2" fill="#fff"/><rect x="965" y="110" width="1" height="14" fill="#00ff00"/><rect x="963" y="110" width="5" height="12" fill="#00ff00"/><rect x="964" y="111" width="3" height="10" fill="#fff"/><rect x="973" y="117" width="1" height="5" fill="#00ff00"/><rect x="971" y="119" width="5" height="2" fill="#00ff00"/><rect x="981" y="117" width="1" height="5" fill="#00ff00"/><rect x="979" y="119" width="5" height="1" fill="#00ff00"/><rect x="989" y="119" width="1" height="4" fill="#00ff00"/><rect x="987" y="119" width="5" height="3" fill="#00ff00"/><rect x="988" y="120" width="3" height="1" fill="#fff"/><rect x="997" y="117" width="1" height="7" fill="#00ff00"/><rect x="995" y="118" width="5" height="4" fill="#00ff00"/><rect x="996" y="119" width="3" height="2" fill="#000"/><rect x="1005" y="107" width="1" height="12" fill="#00ff00"/><rect x="1003" y="111" width="5" height="8" fill="#00ff00"/><rect x="1004" y="112" width="3" height="6" fill="#000"/><rect x="1013" y="99" width="1" height="14" fill="#00ff00"/><rect x="1011" y="108" width="5" height="3" fill="#00ff00"/><rect x="1012" y="109" width="3" height="1" fill="#000"/><rect x="1021" y="107" width="1" height="13" fill="#00ff00"/><rect x="1019" y="108" width="5" height="11" fill="#00ff00"/><rect x="1020" y="109" width="3" height="9" fill="#fff"/><rect x="1029" y="113" width="1" height="7" fill="#00ff00"/><rect x="1027" y="116" width="5" height="4" fill="#00ff00"/><rect x="1028" y="117" width="3" height="2" fill="#000"/><rect x="1037" y="109" width="1" height="23" fill="#00ff00"/><rect x="1035" y="109" width="5" height="20" fill="#00ff00"/><rect x="1036" y="110" width="3" height="18" fill="#fff"/><rect x="1045" y="126" width="1" height="12" fill="#00ff00"/><rect x="1043" y="127" width="5" height="7" fill="#00ff00"/><rect x="1044" y="128" width="3" height="5" fill="#fff"/><rect x="1053" y="133" width="1" height="8" fill="#00ff00"/><rect x="1051" y="133" width="5" height="5" fill="#00ff00"/><rect x="1052" y="134" width="3" height="3" fill="#fff"/><rect x="1061" y="132" width="1" height="7" fill="#00ff00"/><rect x="1059" y="137" width="5" height="1" fill="#00ff00"/><rect x="1069" y="134" width="1" height="5" fill="#00ff00"/><rect x="1067" y="136" width="5" height="1" fill="#00ff00"/><rect x="1077" y="135" width="1" height="6" fill="#00ff00"/><rect x="1075" y="138" width="5" height="1" fill="#00ff00"/><rect x="1085" y="135" width="1" height="7" fill="#00ff00"/><rect x="1083" y="137" width="5" height="2" fill="#00ff00"/><rect x="1093" y="127" width="1" height="12" fill="#00ff00"/><rect x="1091" y="127" width="5" height="11" fill="#00ff00"/><rect x="1092" y="128" width="3" height="9" fill="#000"/><rect x="1101" y="127" width="1" height="5" fill="#00ff00"/><rect x="1099" y="127" width="5" height="4" fill="#00ff00"/><rect x="1100" y="128" width="3" height="2" fill="#fff"/><rect x="1109" y="129" width="1" height="18" fill="#00ff00"/><rect x="1107" y="129" width="5" height="14" fill="#00ff00"/><rect x="1108" y="130" width="3" height="12" fill="#fff"/><rect x="1117" y="134" width="1" height="11" fill="#00ff00"/><rect x="1115" y="136" width="5" height="7" fill="#00ff00"/><rect x="1116" y="137" width="3" height="5" fill="#000"/><rect x="1125" y="128" width="1" height="9" fill="#00ff00"/><rect x="1123" y="128" width="5" height="9" fill="#00ff00"/><rect x="1124" y="129" width="3" height="7" fill="#000"/><rect x="1133" y="120" width="1" height="12" fill="#00ff00"/><rect x="1131" y="122" width="5" height="7" fill="#00ff00"/><rect x="1132" y="123" width="3" height="5" fill="#000"/><rect x="1141" y="113" width="1" height="12" fill="#00ff00"/><rect x="1139" y="115" width="5" height="8" fill="#00ff00"/><rect x="1140" y="116" width="3" height="6" fill="#000"/><rect x="1149" y="112" width="1" height="13" fill="#00ff00"/><rect x="1147" y="114" width="5" height="10" fill="#00ff00"/><rect x="1148" y="115" width="3" height="8" fill="#fff"/><rect x="1157" y="121" width="1" height="7" fill="#00ff00"/><rect x="1155" y="123" width="5" height="4" fill="#00ff00"/><rect x="1156" y="124" width="3" height="2" fill="#fff"/><rect x="1165" y="115" width="1" height="17" fill="#00ff00"/><rect x="1163" y="117" width="5" height="11" fill="#00ff00"/><rect x="1164" y="118" width="3" height="9" fill="#000"/><rect x="1173" y="114" width="1" height="13" fill="#00ff00"/><rect x="1171" y="116" width="5" height="11" fill="#00ff00"/><rect x="1172" y="117" width="3" height="9" fill="#fff"/><rect x="1181" y="119" width="1" height="10" fill="#00ff00"/><rect x="1179" y="119" width="5" height="8" fill="#00ff00"/><rect x="1180" y="120" width="3" height="6" fill="#000"/><rect x="1189" y="116" width="1" height="15" fill="#00ff00"/><rect x="1187" y="119" width="5" height="10" fill="#00ff00"/><rect x="1188" y="120" width="3" height="8" fill="#fff"/><rect x="1197" y="128" width="1" height="12" fill="#00ff00"/><rect x="1195" y="128" width="5" height="11" fill="#00ff00"/><rect x="1196" y="129" width="3" height="9" fill="#fff"/><rect x="1205" y="129" width="1" height="10" fill="#00ff00"/><rect x="1203" y="137" width="5" height="2" fill="#00ff00"/><rect x="1213" y="136" width="1" height="12" fill="#00ff00"/><rect x="1211" y="138" width="5" height="3" fill="#00ff00"/><rect x="1212" y="139" width="3" height="1" fill="#fff"/><rect x="1221" y="138" width="1" height="15" fill="#00ff00"/><rect x="1219" y="140" width="5" height="9" fill="#00ff00"/><rect x="1220" y="141" width="3" height="7" fill="#fff"/><rect x="1229" y="139" width="1" height="15" fill="#00ff00"/><rect x="1227" y="144" width="5" height="6" fill="#00ff00"/><rect x="1228" y="145" width="3" height="4" fill="#000"/><rect x="1237" y="131" width="1" height="15" fill="#00ff00"/><rect x="1235" y="138" width="5" height="7" fill="#00ff00"/><rect x="1236" y="139" width="3" height="5" fill="#000"/><rect x="1245" y="136" width="1" height="15" fill="#00ff00"/><rect x="1243" y="137" width="5" height="7" fill="#00ff00"/><rect x="1244" y="138" width="3" height="5" fill="#fff"/><rect x="1253" y="142" width="1" height="10" fill="#00ff00"/><rect x="1251" y="143" width="5" height="2" fill="#00ff00"/><rect x="1261" y="129" width="1" height="18" fill="#00ff00"/><rect x="1259" y="131" width="5" height="15" fill="#00ff00"/><rect x="1260" y="132" width="3" height="13" fill="#000"/><rect x="1269" y="121" width="1" height="14" fill="#00ff00"/><rect x="1267" y="125" width="5" height="6" fill="#00ff00"/><rect x="1268" y="126" width="3" height="4" fill="#000"/><rect x="1277" y="111" width="1" height="15" fill="#00ff00"/><rect x="1275" y="116" width="5" height="10" fill="#00ff00"/><rect x="1276" y="117" width="3" height="8" fill="#000"/><rect x="1285" y="108" width="1" height="9" fill="#00ff00"/><rect x="1283" y="111" width="5" height="6" fill="#00ff00"/><rect x="1284" y="112" width="3" height="4" fill="#000"/><rect x="1293" y="100" width="1" height="12" fill="#00ff00"/><rect x="1291" y="102" width="5" height="10" fill="#00ff00"/><rect x="1292" y="103" width="3" height="8" fill="#000"/><rect x="1301" y="99" width="1" height="6" fill="#00ff00"/><rect x="1299" y="101" width="5" height="4" fill="#00ff00"/><rect x="1300" y="102" width="3" height="2" fill="#fff"/><rect x="1309" y="99" width="1" height="10" fill="#00ff00"/><rect x="1307" y="103" width="5" height="2" fill="#00ff00"/><rect x="1317" y="97" width="1" height="9" fill="#00ff00"/><rect x="1315" y="99" width="5" height="5" fill="#00ff00"/><rect x="1316" y="100" width="3" height="3" fill="#000"/><rect x="1325" y="97" width="1" height="22" fill="#00ff00"/><rect x="1323" y="100" width="5" height="19" fill="#00ff00"/><rect x="1324" y="101" width="3" height="17" fill="#fff"/><rect x="1333" y="107" width="1" height="14" fill="#00ff00"/><rect x="1331" y="118" width="5" height="2" fill="#00ff00"/><rect x="1341" y="116" width="1" height="8" fill="#00ff00"/><rect x="1339" y="119" width="5" height="2" fill="#00ff00"/><rect x="1349" y="102" width="1" height="19" fill="#00ff00"/><rect x="1347" y="102" width="5" height="18" fill="#00ff00"/><rect x="1348" y="103" width="3" height="16" fill="#000"/><rect x="1357" y="99" width="1" height="6" fill="#00ff00"/><rect x="1355" y="101" width="5" height="1" fill="#00ff00"/><rect x="1365" y="97" width="1" height="7" fill="#00ff00"/><rect x="1363" y="99" width="5" height="4" fill="#00ff00"/><rect x="1364" y="100" width="3" height="2" fill="#000"/><rect x="1373" y="82" width="1" height="19" fill="#00ff00"/><rect x="1371" y="82" width="5" height="18" fill="#00ff00"/><rect x="1372" y="83" width="3" height="16" fill="#000"/><rect x="1381" y="79" width="1" height="24" fill="#00ff00"/><rect x="1379" y="82" width="5" height="19" fill="#00ff00"/><rect x="1380" y="83" width="3" height="17" fill="#fff"/><rect x="1389" y="94" width="1" height="11" fill="#00ff00"/><rect x="1387" y="97" width="5" height="5" fill="#00ff00"/><rect x="1388" y="98" width="3" height="3" fill="#000"/><rect x="1397" y="96" width="1" height="7" fill="#00ff00"/><rect x="1395" y="98" width="5" height="2" fill="#00ff00"/><rect x="1405" y="99" width="1" height="11" fill="#00ff00"/><rect x="1403" y="100" width="5" height="7" fill="#00ff00"/><rect x="1404" y="101" width="3" height="5" fill="#fff"/><rect x="1413" y="92" width="1" height="16" fill="#00ff00"/><rect x="1411" y="93" width="5" height="15" fill="#00ff00"/><rect x="1412" y="94" width="3" height="13" fill="#000"/><rect x="1421" y="92" width="1" height="27" fill="#00ff00"/><rect x="1419" y="92" width="5" height="19" fill="#00ff00"/><rect x="1420" y="93" width="3" height="17" fill="#fff"/><rect x="1429" y="102" width="1" height="9" fill="#00ff00"/><rect x="1427" y="106" width="5" height="4" fill="#00ff00"/><rect x="1428" y="107" width="3" height="2" fill="#000"/><rect x="1437" y="97" width="1" height="11" fill="#00ff00"/><rect x="1435" y="98" width="5" height="10" fill="#00ff00"/><rect x="1436" y="99" width="3" height="8" fill="#000"/><rect x="1445" y="97" width="1" height="9" fill="#00ff00"/><rect x="1443" y="98" width="5" height="1" fill="#00ff00"/><rect x="1453" y="97" width="1" height="4" fill="#00ff00"/><rect x="1451" y="99" width="5" height="1" fill="#00ff00"/><rect x="1461" y="73" width="1" height="29" fill="#00ff00"/><rect x="1459" y="78" width="5" height="22" fill="#00ff00"/><rect x="1460" y="79" width="3" height="20" fill="#000"/><rect x="1469" y="74" width="1" height="13" fill="#00ff00"/><rect x="1467" y="77" width="5" height="2" fill="#00ff00"/><rect x="20" y="640" width="3" height="24" fill="#00ff00"/><rect x="28" y="640" width="3" height="26" fill="#00ff00"/><rect x="36" y="640" width="3" height="24" fill="#00ff00"/><rect x="44" y="640" width="3" height="21" fill="#00ff00"/><rect x="52" y="640" width="3" height="18" fill="#00ff00"/><rect x="60" y="640" width="3" height="13" fill="#00ff00"/><rect x="68" y="640" width="3" height="8" fill="#00ff00"/><rect x="76" y="640" width="3" height="3" fill="#00ff00"/><rect x="84" y="640" width="3" height="4" fill="#00ff00"/><rect x="92" y="640" width="3" height="9" fill="#00ff00"/><rect x="100" y="640" width="3" height="13" fill="#00ff00"/><rect x="108" y="640" width="3" height="20" fill="#00ff00"/><rect x="116" y="640" width="3" height="26" fill="#00ff00"/><rect x="124" y="640" width="3" height="19" fill="#00ff00"/><rect x="132" y="640" width="3" height="17" fill="#00ff00"/><rect x="140" y="640" width="3" height="15" fill="#00ff00"/><rect x="148" y="640" width="3" height="12" fill="#00ff00"/><rect x="156" y="640" width="3" height="12" fill="#00ff00"/><rect x="164" y="640" width="3" height="6" fill="#00ff00"/><rect x="172" y="639" width="3" height="1" fill="#ff0000"/><rect x="180" y="636" width="3" height="4" fill="#ff0000"/><rect x="188" y="629" width="3" height="11" fill="#ff0000"/><rect x="196" y="624" width="3" height="16" fill="#ff0000"/><rect x="204" y="617" width="3" height="23" fill="#ff0000"/><rect x="212" y="616" width="3" height="24" fill="#ff0000"/><rect x="220" y="615" width="3" height="25" fill="#ff0000"/><rect x="228" y="610" width="3" height="30" fill="#ff0000"/><rect x="236" y="610" width="3" height="30" fill="#ff0000"/><rect x="244" y="608" width="3" height="32" fill="#ff0000"/><rect x="252" y="607" width="3" height="33" fill="#ff0000"/><rect x="260" y="601" width="3" height="39" fill="#ff0000"/><rect x="268" y="599" width="3" height="41" fill="#ff0000"/><rect x="276" y="603" width="3" height="37" fill="#ff0000"/><rect x="284" y="602" width="3" height="38" fill="#ff0000"/><rect x="292" y="602" width="3" height="38" fill="#ff0000"/><rect x="300" y="601" width="3" height="39" fill="#ff0000"/><rect x="308" y="606" width="3" height="34" fill="#ff0000"/><rect x="316" y="615" width="3" height="25" fill="#ff0000"/><rect x="324" y="620" width="3" height="20" fill="#ff0000"/><rect x="332" y="628" width="3" height="12" fill="#ff0000"/><rect x="340" y="630" width="3" height="10" fill="#ff0000"/><rect x="348" y="628" width="3" height="12" fill="#ff0000"/><rect x="356" y="626" width="3" height="14" fill="#ff0000"/><rect x="364" y="621" width="3" height="19" fill="#ff0000"/><rect x="372" y="634" width="3" height="6" fill="#ff0000"/><rect x="380" y="634" width="3" height="6" fill="#ff0000"/><rect x="388" y="631" width="3" height="9" fill="#ff0000"/><rect x="396" y="625" width="3" height="15" fill="#ff0000"/><rect x="404" y="615" width="3" height="25" fill="#ff0000"/><rect x="412" y="610" width="3" height="30" fill="#ff0000"/><rect x="420" y="610" width="3" height="30" fill="#ff0000"/><rect x="428" y="606" width="3" height="34" fill="#ff0000"/><rect x="436" y="610" width="3" height="30" fill="#ff0000"/><rect x="444" y="617" width="3" height="23" fill="#ff0000"/><rect x="452" y="626" width="3" height="14" fill="#ff0000"/><rect x="460" y="635" width="3" height="5" fill="#ff0000"/><rect x="468" y="640" width="3" height="7" fill="#00ff00"/><rect x="476" y="640" width="3" height="12" fill="#00ff00"/><rect x="484" y="640" width="3" height="13" fill="#00ff00"/><rect x="492" y="640" width="3" height="16" fill="#00ff00"/><rect x="500" y="640" width="3" height="21" fill="#00ff00"/><rect x="508" y="640" width="3" height="28" fill="#00ff00"/><rect x="516" y="640" width="3" height="30" fill="#00ff00"/><rect x="524" y="640" width="3" height="34" fill="#00ff00"/><rect x="532" y="640" width="3" height="34" fill="#00ff00"/><rect x="540" y="640" width="3" height="32" fill="#00ff00"/><rect x="548" y="640" width="3" height="31" fill="#00ff00"/><rect x="556" y="640" width="3" height="32" fill="#00ff00"/><rect x="564" y="640" width="3" height="28" fill="#00ff00"/><rect x="572" y="640" width="3" height="21" fill="#00ff00"/><rect x="580" y="640" width="3" height="15" fill="#00ff00"/><rect x="588" y="640" width="3" height="9" fill="#00ff00"/><rect x="596" y="640" width="3" height="7" fill="#00ff00"/><rect x="604" y="640" width="3" height="5" fill="#00ff00"/><rect x="612" y="640" width="3" height="4" fill="#00ff00"/><rect x="620" y="640" width="3" height="4" fill="#00ff00"/><rect x="628" y="640" width="3" height="7" fill="#00ff00"/><rect x="636" y="640" width="3" height="9" fill="#00ff00"/><rect x="644" y="640" width="3" height="10" fill="#00ff00"/><rect x="652" y="640" width="3" height="8" fill="#00ff00"/><rect x="660" y="640" width="3" height="5" fill="#00ff00"/><rect x="668" y="640" width="3" height="3" fill="#00ff00"/><rect x="676" y="640" width="3" height="3" fill="#00ff00"/><rect x="684" y="640" width="3" height="5" fill="#00ff00"/><rect x="692" y="640" width="3" height="6" fill="#00ff00"/><rect x="700" y="640" width="3" height="7" fill="#00ff00"/><rect x="708" y="640" width="3" height="7" fill="#00ff00"/><rect x="716" y="640" width="3" height="7" fill="#00ff00"/><rect x="724" y="640" width="3" height="5" fill="#00ff00"/><rect x="732" y="640" width="3" height="3" fill="#00ff00"/><rect x="740" y="640" width="3" height="2" fill="#00ff00"/><rect x="748" y="640" width="3" height="2" fill="#00ff00"/><rect x="756" y="640" width="3" height="1" fill="#00ff00"/><rect x="764" y="640" width="3" height="1" fill="#00ff00"/><rect x="772" y="640" width="3" height="2" fill="#00ff00"/><rect x="780" y="640" width="3" height="4" fill="#00ff00"/><rect x="788" y="640" width="3" height="5" fill="#00ff00"/><rect x="796" y="640" width="3" height="4" fill="#00ff00"/><rect x="804" y="640" width="3" height="3" fill="#00ff00"/><rect x="812" y="640" width="3" height="3" fill="#00ff00"/><rect x="820" y="640" width="3" height="8" fill="#00ff00"/><rect x="828" y="640" width="3" height="8" fill="#00ff00"/><rect x="836" y="640" width="3" height="8" fill="#00ff00"/><rect x="844" y="640" width="3" height="8" fill="#00ff00"/><rect x="852" y="640" width="3" height="9" fill="#00ff00"/><rect x="860" y="640" width="3" height="8" fill="#00ff00"/><rect x="868" y="640" width="3" height="7" fill="#00ff00"/><rect x="876" y="640" width="3" height="7" fill="#00ff00"/><rect x="884" y="640" width="3" height="8" fill="#00ff00"/><rect x="892" y="640" width="3" height="9" fill="#00ff00"/><rect x="900" y="640" width="3" height="9" fill="#00ff00"/><rect x="908" y="640" width="3" height="8" fill="#00ff00"/><rect x="916" y="640" width="3" height="6" fill="#00ff00"/><rect x="924" y="640" width="3" height="2" fill="#00ff00"/><rect x="932" y="639" width="3" height="1" fill="#ff0000"/><rect x="940" y="637" width="3" height="3" fill="#ff0000"/><rect x="948" y="637" width="3" height="3" fill="#ff0000"/><rect x="956" y="637" width="3" height="3" fill="#ff0000"/><rect x="964" y="639" width="3" height="1" fill="#ff0000"/><rect x="972" y="640" width="3" height="1" fill="#00ff00"/><rect x="980" y="640" width="3" height="2" fill="#00ff00"/><rect x="988" y="640" width="3" height="3" fill="#00ff00"/><rect x="996" y="640" width="3" height="3" fill="#00ff00"/><rect x="1004" y="640" width="3" height="2" fill="#00ff00"/><rect x="1012" y="639" width="3" height="1" fill="#ff0000"/><rect x="1020" y="640" width="3" height="1" fill="#00ff00"/><rect x="1028" y="640" width="3" height="1" fill="#00ff00"/><rect x="1036" y="640" width="3" height="4" fill="#00ff00"/><rect x="1044" y="640" width="3" height="6" fill="#00ff00"/><rect x="1052" y="640" width="3" height="8" fill="#00ff00"/><rect x="1060" y="640" width="3" height="8" fill="#00ff00"/><rect x="1068" y="640" width="3" height="8" fill="#00ff00"/><rect x="1076" y="640" width="3" height="7" fill="#00ff00"/><rect x="1084" y="640" width="3" height="7" fill="#00ff00"/><rect x="1092" y="640" width="3" height="5" fill="#00ff00"/><rect x="1100" y="640" width="3" height="3" fill="#00ff00"/><rect x="1108" y="640" width="3" height="4" fill="#00ff00"/><rect x="1116" y="640" width="3" height="4" fill="#00ff00"/><rect x="1124" y="640" width="3" height="1" fill="#00ff00"/><rect x="1132" y="638" width="3" height="2" fill="#ff0000"/><rect x="1140" y="635" width="3" height="5" fill="#ff0000"/><rect x="1148" y="635" width="3" height="5" fill="#ff0000"/><rect x="1156" y="635" width="3" height="5" fill="#ff0000"/><rect x="1164" y="634" width="3" height="6" fill="#ff0000"/><rect x="1172" y="635" width="3" height="5" fill="#ff0000"/><rect x="1180" y="635" width="3" height="5" fill="#ff0000"/><rect x="1188" y="637" width="3" height="3" fill="#ff0000"/><rect x="1196" y="639" width="3" height="1" fill="#ff0000"/><rect x="1204" y="640" width="3" height="2" fill="#00ff00"/><rect x="1212" y="640" width="3" height="5" fill="#00ff00"/><rect x="1220" y="640" width="3" height="6" fill="#00ff00"/><rect x="1228" y="640" width="3" height="6" fill="#00ff00"/><rect x="1236" y="640" width="3" height="5" fill="#00ff00"/><rect x="1244" y="640" width="3" height="5" fill="#00ff00"/><rect x="1252" y="640" width="3" height="5" fill="#00ff00"/><rect x="1260" y="640" width="3" height="2" fill="#00ff00"/><rect x="1268" y="638" width="3" height="2" fill="#ff0000"/><rect x="1276" y="634" width="3" height="6" fill="#ff0000"/><rect x="1284" y="631" width="3" height="9" fill="#ff0000"/><rect x="1292" y="628" width="3" height="12" fill="#ff0000"/><rect x="1300" y="627" width="3" height="13" fill="#ff0000"/><rect x="1308" y="627" width="3" height="13" fill="#ff0000"/><rect x="1316" y="627" width="3" height="13" fill="#ff0000"/><rect x="1324" y="631" width="3" height="9" fill="#ff0000"/><rect x="1332" y="634" width="3" height="6" fill="#ff0000"/><rect x="1340" y="637" width="3" height="3" fill="#ff0000"/><rect x="1348" y="635" width="3" height="5" fill="#ff0000"/><rect x="1356" y="635" width="3" height="5" fill="#ff0000"/><rect x="1364" y="634" width="3" height="6" fill="#ff0000"/><rect x="1372" y="631" width="3" height="9" fill="#ff0000"/><rect x="1380" y="633" width="3" height="7" fill="#ff0000"/><rect x="1388" y="635" width="3" height="5" fill="#ff0000"/><rect x="1396" y="636" width="3" height="4" fill="#ff0000"/><rect x="1404" y="639" width="3" height="1" fill="#ff0000"/><rect x="1412" y="638" width="3" height="2" fill="#ff0000"/><rect x="1420" y="640" width="3" height="2" fill="#00ff00"/><rect x="1428" y="640" width="3" height="4" fill="#00ff00"/><rect x="1436" y="640" width="3" height="3" fill="#00ff00"/><rect x="1444" y="640" width="3" height="3" fill="#00ff00"/><rect x="1452" y="640" width="3" height="2" fill="#00ff00"/><rect x="1460" y="638" width="3" height="2" fill="#ff0000"/><rect x="1468" y="636" width="3" height="4" fill="#ff0000"/><polyline fill="none" stroke="#ff0000" stroke-width="1" points="21.4,664.3 25.0,669.4 30.0,674.1 36.8,676.5 45.0,678.9 53.6,680.8 60.3,679.5 68.7,676.4 78.0,671.0 83.8,672.2 90.5,677.7 102.2,688.7 110.6,700.4 117.7,711.0 124.9,707.9 132.4,710.5 145.9,712.6 157.3,715.0 166.0,708.8 173.6,702.9 181.1,699.9 187.8,692.0 199.6,679.4 206.3,668.5 213.0,661.8 221.4,655.1 229.8,641.7 241.5,629.1 253.3,614.0 260.0,601.7 269.3,587.6 276.8,583.4 285.2,572.5 293.6,562.5 302.0,551.9 309.5,549.0 317.0,550.7 325.5,551.1 333.9,555.7 341.4,555.7 349.0,550.7 357.3,545.7 365.4,536.8 373.3,547.7 380.8,546.9 389.2,542.3 397.6,530.5 404.3,517.2 412.7,504.6 422.8,494.5 428.7,483.6 437.9,479.9 446.3,482.3 454.7,487.8 463.0,496.2 469.8,507.1 477.3,515.5 484.9,518.5 493.3,525.5 501.6,535.6 505.0,542.4 513.4,554.2 524.3,571.0 536.9,582.7 548.6,591.9 557.0,601.2 565.4,604.9 575.5,602.0 588.9,596.1 595.6,595.0 617.4,595.0 625.8,597.8 645.9,607.9 659.4,605.9 670.3,603.7 679.5,605.4 689.6,608.7 706.3,613.3 717.2,614.9 733.2,614.1 739.9,611.7 768.5,612.3 778.9,615.5 789.2,618.1 799.6,618.1 802.6,616.7 810.0,617.0 813.7,618.1 821.1,624.7 833.8,627.4 847.1,630.4 853.0,632.9 870.8,634.1 882.7,637.8 890.0,640.8 903.4,644.9 910.6,644.9 924.0,641.8 931.0,639.0 938.0,634.5 945.0,634.1 960.2,634.1 962.2,634.6 968.4,636.1 975.0,638.5 982.9,639.4 1001.4,640.0 1009.7,639.2 1014.0,637.5 1019.0,637.0 1023.0,638.5 1034.5,640.3 1043.4,644.5 1052.3,648.9 1061.2,651.6 1068.6,653.8 1082.0,656.0 1089.4,655.6 1098.3,653.8 1104.2,654.6 1108.7,656.0 1117.6,656.0 1126.9,654.1 1137.3,648.2 1144.7,645.2 1159.5,642.7 1174.3,640.8 1186.2,640.0 1198.1,643.0 1210.0,647.4 1218.9,651.1 1227.8,653.8 1248.5,654.1 1254.5,655.1 1263.4,652.6 1272.3,647.4 1282.7,640.0 1293.0,632.6 1307.9,625.9 1317.5,621.9 1325.7,623.7 1341.5,627.8 1352.6,624.4 1364.5,622.2 1373.4,617.0 1392.7,617.0 1403.1,619.2 1415.0,618.5 1423.9,623.7 1429.8,624.9 1453.5,624.9 1458.0,622.2 1468.4,617.8"/><polyline fill="none" stroke="#00ff00" stroke-width="1" points="21.4,640.8 30.0,647.5 36.8,653.5 45.0,659.3 53.6,663.0 62.0,666.0 70.4,667.7 78.8,669.0 87.0,670.2 95.5,672.2 105.6,676.9 115.7,684.5 132.4,692.8 145.9,699.5 157.6,704.1 166.0,705.1 176.0,705.1 182.8,703.8 191.0,700.5 199.6,696.2 208.0,690.3 219.7,681.1 233.0,668.5 246.5,655.1 260.0,640.8 275.0,621.5 286.9,608.6 297.0,594.3 308.7,580.9 318.8,574.2 328.8,569.2 340.6,565.8 355.7,559.9 364.9,554.9 377.5,552.4 389.2,549.9 401.0,543.2 411.0,534.8 422.8,523.0 432.9,513.0 442.9,504.6 451.3,501.2 461.4,499.5 471.4,501.2 481.5,505.1 491.6,509.6 501.6,515.5 505.0,518.6 521.8,534.9 538.6,551.7 553.7,566.8 566.2,577.7 582.2,586.1 599.0,589.4 615.7,591.1 632.5,594.5 649.3,598.7 666.0,601.5 681.2,602.0 698.0,605.4 714.7,608.7 731.5,610.9 753.3,611.2 777.4,611.8 793.7,614.0 810.0,614.8 823.4,617.8 841.2,621.8 860.5,626.7 882.7,631.1 890.0,632.5 900.0,635.5 912.0,637.5 925.0,637.1 1015.0,637.3 1030.0,639.0 1043.4,640.0 1058.2,644.5 1073.0,647.4 1087.9,650.4 1102.7,651.1 1114.6,652.6 1125.0,652.9 1135.8,651.4 1152.1,648.9 1169.9,645.9 1186.2,643.7 1204.0,643.7 1215.9,645.9 1233.7,648.6 1248.5,650.4 1270.8,650.7 1285.6,647.4 1300.5,641.5 1315.3,635.6 1330.1,632.1 1349.7,629.6 1364.5,626.4 1379.3,623.7 1394.2,620.7 1415.0,620.4 1423.9,622.2 1432.8,622.9 1468.4,622.2"/><path transform="translate(169 712)" d="M0.5 9.5L9 1M2.5 0.8H9.3V7.5" fill="none" stroke="#ff0000" stroke-width="1.8" shape-rendering="auto"/><path transform="translate(465 474)" d="M0.5 0.5L9 9M9.3 2.5V9.2H2.5" fill="none" stroke="#00ff00" stroke-width="1.8" shape-rendering="auto"/><path transform="translate(929 633)" d="M0.5 9.5L9 1M2.5 0.8H9.3V7.5" fill="none" stroke="#ff0000" stroke-width="1.8" shape-rendering="auto"/><path transform="translate(969 631.5)" d="M0.5 0.5L9 9M9.3 2.5V9.2H2.5" fill="none" stroke="#00ff00" stroke-width="1.8" shape-rendering="auto"/><path transform="translate(1009 632.5)" d="M0.5 9.5L9 1M2.5 0.8H9.3V7.5" fill="none" stroke="#ff0000" stroke-width="1.8" shape-rendering="auto"/><path transform="translate(1017.5 632.5)" d="M0.5 0.5L9 9M9.3 2.5V9.2H2.5" fill="none" stroke="#00ff00" stroke-width="1.8" shape-rendering="auto"/><path transform="translate(1129 649)" d="M0.5 9.5L9 1M2.5 0.8H9.3V7.5" fill="none" stroke="#ff0000" stroke-width="1.8" shape-rendering="auto"/><path transform="translate(1201 641.4)" d="M0.5 0.5L9 9M9.3 2.5V9.2H2.5" fill="none" stroke="#00ff00" stroke-width="1.8" shape-rendering="auto"/><path transform="translate(1265 647)" d="M0.5 9.5L9 1M2.5 0.8H9.3V7.5" fill="none" stroke="#ff0000" stroke-width="1.8" shape-rendering="auto"/><path transform="translate(1417 613.5)" d="M0.5 0.5L9 9M9.3 2.5V9.2H2.5" fill="none" stroke="#00ff00" stroke-width="1.8" shape-rendering="auto"/><path transform="translate(1457.5 613)" d="M0.5 9.5L9 1M2.5 0.8H9.3V7.5" fill="none" stroke="#ff0000" stroke-width="1.8" shape-rendering="auto"/><rect x="18" y="45" width="2" height="708" fill="#000"/></svg>
<svg class="a" style="left:24px;top:55px" width="10" height="6"><path d="M0 0H9L4.5 5Z" fill="#fff"/></svg>
<div class="t" style="top:50px;font-size:12.4px;line-height:16px;color:#fff;left:39px;"><span style="letter-spacing:-1px">XAUUSD</span>,M5</div>
<div class="t" style="top:50px;font-size:12.4px;line-height:16px;color:#fff;left:113.4px;letter-spacing:0.155px;">1816.21 1816.36 1815.81 1816.24</div>
<div class="t" style="top:45px;font-size:12.4px;line-height:16px;color:#fff;left:1500.5px;letter-spacing:0.15px;">1817.45</div>
<div class="t" style="top:94px;font-size:12.4px;line-height:16px;color:#fff;left:1500.5px;letter-spacing:0.15px;">1815.10</div>
<div class="t" style="top:143px;font-size:12.4px;line-height:16px;color:#fff;left:1500.5px;letter-spacing:0.15px;">1812.80</div>
<div class="t" style="top:192px;font-size:12.4px;line-height:16px;color:#fff;left:1500.5px;letter-spacing:0.15px;">1810.50</div>
<div class="t" style="top:241px;font-size:12.4px;line-height:16px;color:#fff;left:1500.5px;letter-spacing:0.15px;">1808.20</div>
<div class="t" style="top:290px;font-size:12.4px;line-height:16px;color:#fff;left:1500.5px;letter-spacing:0.15px;">1805.85</div>
<div class="t" style="top:339px;font-size:12.4px;line-height:16px;color:#fff;left:1500.5px;letter-spacing:0.15px;">1803.55</div>
<div class="t" style="top:388px;font-size:12.4px;line-height:16px;color:#fff;left:1500.5px;letter-spacing:0.15px;">1801.25</div>
<div class="t" style="top:437px;font-size:12.4px;line-height:16px;color:#fff;left:1500.5px;letter-spacing:0.15px;">1798.90</div>
<div class="r" style="left:1495px;top:71px;width:55px;height:13px;background:#fff;"></div>
<div class="t" style="top:70px;font-size:12.4px;line-height:16px;color:#000;left:1500.5px;letter-spacing:0.15px;">1816.24</div>
<div class="t" style="top:467.5px;font-size:12.4px;line-height:16px;color:#fff;left:1497px;letter-spacing:0.15px;">2.8754</div>
<div class="t" style="top:633px;font-size:12.4px;line-height:16px;color:#fff;left:1497px;letter-spacing:0.15px;">0.00</div>
<div class="t" style="top:714px;font-size:12.4px;line-height:16px;color:#fff;left:1497px;letter-spacing:0.15px;">-1.4825</div>
<div class="t" style="top:469.5px;font-size:12.4px;line-height:16px;color:#fff;left:25.5px;letter-spacing:0.15px;"><span style="letter-spacing:-0.85px">MACD</span>(12,26,9)</div>
<div class="t" style="top:469.5px;font-size:12.4px;line-height:16px;color:#fff;left:114.2px;letter-spacing:0.18px;">0.3819 0.3137 0.0682 0.0000</div>
<div class="t" style="top:732.5px;font-size:12.4px;line-height:16px;color:#fff;left:20px;">4 Jan 2022</div>
<div class="t" style="top:732.5px;font-size:12.4px;line-height:16px;color:#fff;left:116px;">4 Jan 14:25</div>
<div class="t" style="top:732.5px;font-size:12.4px;line-height:16px;color:#fff;left:212px;">4 Jan 15:25</div>
<div class="t" style="top:732.5px;font-size:12.4px;line-height:16px;color:#fff;left:308px;">4 Jan 16:25</div>
<div class="t" style="top:732.5px;font-size:12.4px;line-height:16px;color:#fff;left:404px;">4 Jan 17:25</div>
<div class="t" style="top:732.5px;font-size:12.4px;line-height:16px;color:#fff;left:500px;">4 Jan 18:25</div>
<div class="t" style="top:732.5px;font-size:12.4px;line-height:16px;color:#fff;left:596px;">4 Jan 19:25</div>
<div class="t" style="top:732.5px;font-size:12.4px;line-height:16px;color:#fff;left:692px;">4 Jan 20:25</div>
<div class="t" style="top:732.5px;font-size:12.4px;line-height:16px;color:#fff;left:788px;">4 Jan 21:25</div>
<div class="t" style="top:732.5px;font-size:12.4px;line-height:16px;color:#fff;left:884px;">4 Jan 22:25</div>
<div class="t" style="top:732.5px;font-size:12.4px;line-height:16px;color:#fff;left:980px;">4 Jan 23:25</div>
<div class="t" style="top:732.5px;font-size:12.4px;line-height:16px;color:#fff;left:1076px;">5 Jan 01:25</div>
<div class="t" style="top:732.5px;font-size:12.4px;line-height:16px;color:#fff;left:1172px;">5 Jan 02:25</div>
<div class="t" style="top:732.5px;font-size:12.4px;line-height:16px;color:#fff;left:1268px;">5 Jan 03:25</div>
<div class="t" style="top:732.5px;font-size:12.4px;line-height:16px;color:#fff;left:1364px;">5 Jan 04:25</div>
<div class="t" style="top:732.5px;font-size:12.4px;line-height:16px;color:#fff;left:1460px;">5 Jan 05:25</div>
<div class="r" style="left:17px;top:753px;width:1533px;height:2px;background:#fff;"></div>
<div class="r" style="left:16px;top:755px;width:1534px;height:1px;background:#000;"></div>
<div class="r" style="left:17px;top:756px;width:1px;height:23px;background:#4a4a4a;"></div>
<div class="t" style="top:757.2px;font-size:15.4px;line-height:20px;color:#7d7d82;left:36.5px;">AUDUSD,H1</div>
<div class="t" style="top:757.2px;font-size:15.4px;line-height:20px;color:#7d7d82;left:153px;">USDCAD,M5</div>
<div class="t" style="top:757.2px;font-size:15.4px;line-height:20px;color:#7d7d82;left:273px;">NZDUSD,M5</div>
<div class="t" style="top:757.2px;font-size:15.4px;line-height:20px;color:#7d7d82;left:392px;">USDCHF,M15</div>
<div class="t" style="top:757.2px;font-size:15.4px;line-height:20px;color:#7d7d82;left:516.5px;">EURUSD,M1</div>
<div class="t" style="top:757.2px;font-size:15.4px;line-height:20px;color:#7d7d82;left:633px;">GBPUSD,M5</div>
<div class="t" style="top:757.2px;font-size:15.4px;line-height:20px;color:#7d7d82;left:749px;">XAUUSD,M5</div>
<div class="r" style="left:139px;top:758px;width:1px;height:19px;background:#8c8c8c;"></div>
<div class="r" style="left:259px;top:758px;width:1px;height:19px;background:#8c8c8c;"></div>
<div class="r" style="left:379px;top:758px;width:1px;height:19px;background:#8c8c8c;"></div>
<div class="r" style="left:502px;top:758px;width:1px;height:19px;background:#8c8c8c;"></div>
<div class="r" style="left:619px;top:758px;width:1px;height:19px;background:#8c8c8c;"></div>
<div class="r" style="left:735px;top:758px;width:1px;height:19px;background:#8c8c8c;"></div>
<div class="r" style="left:856px;top:756px;width:120px;height:24px;background:#8a8a8a;"></div>
<div class="r" style="left:855px;top:755px;width:120px;height:24px;background:#000;"></div>
<div class="r" style="left:856px;top:755px;width:118px;height:23px;background:#cce8cf;"></div>
<div class="t" style="top:757.2px;font-size:15.4px;line-height:20px;color:#000;left:869px;">XAUUSD,M5</div>
<svg class="a" style="left:1515px;top:762px" width="34" height="10"><path d="M8 0V8.4L3.4 4.2Z M28 0V8.4L32.6 4.2Z" fill="#a6a6a6"/></svg>
<div class="r" style="left:0px;top:781px;width:1550px;height:4px;background:#f7f7f7;"></div>
<div class="r" style="left:0px;top:785px;width:1550px;height:1px;background:#a0a0a0;"></div>
<div class="r" style="left:0px;top:786px;width:1550px;height:26px;background:#fff;"></div>
<div class="r" style="left:219px;top:786px;width:1px;height:26px;background:#e5e5e5;"></div>
<div class="r" style="left:337px;top:786px;width:1px;height:26px;background:#e5e5e5;"></div>
<div class="r" style="left:430px;top:786px;width:1px;height:26px;background:#e5e5e5;"></div>
<div class="r" style="left:550px;top:786px;width:1px;height:26px;background:#e5e5e5;"></div>
<div class="r" style="left:683px;top:786px;width:1px;height:26px;background:#e5e5e5;"></div>
<div class="r" style="left:816px;top:786px;width:1px;height:26px;background:#e5e5e5;"></div>
<div class="r" style="left:949px;top:786px;width:1px;height:26px;background:#e5e5e5;"></div>
<div class="r" style="left:1082px;top:786px;width:1px;height:26px;background:#e5e5e5;"></div>
<div class="r" style="left:1215px;top:786px;width:1px;height:26px;background:#e5e5e5;"></div>
<div class="r" style="left:1348px;top:786px;width:1px;height:26px;background:#e5e5e5;"></div>
<div class="t" style="top:790px;font-size:15px;line-height:20px;color:#000;right:1336.5px;"><span style="font-size:14.7px">时间</span></div>
<div class="t" style="top:790px;font-size:15px;line-height:20px;color:#000;right:1217px;"><span style="font-size:14.7px">类型</span></div>
<div class="t" style="top:790px;font-size:15px;line-height:20px;color:#000;right:1124px;"><span style="font-size:14.7px">手数</span></div>
<div class="t" style="top:790px;font-size:15px;line-height:20px;color:#000;right:1005px;"><span style="font-size:14.7px">交易品种</span></div>
<div class="t" style="top:790px;font-size:15px;line-height:20px;color:#000;right:872px;"><span style="font-size:14.7px">价格</span></div>
<div class="t" style="top:790px;font-size:15px;line-height:20px;color:#000;right:739px;"><span style="font-size:14.7px">止损</span></div>
<div class="t" style="top:790px;font-size:15px;line-height:20px;color:#000;right:606px;"><span style="font-size:14.7px">止盈</span></div>
<div class="t" style="top:790px;font-size:15px;line-height:20px;color:#000;right:473px;"><span style="font-size:14.7px">价格</span></div>
<div class="t" style="top:790px;font-size:15px;line-height:20px;color:#000;right:340px;"><span style="font-size:14.7px">手续费</span></div>
<div class="t" style="top:790px;font-size:15px;line-height:20px;color:#000;right:207px;"><span style="font-size:14.7px">库存费</span></div>
<div class="t" style="top:790px;font-size:15px;line-height:20px;color:#000;right:3px;"><span style="font-size:14.7px">获利</span></div>
<div class="r" style="left:0px;top:812px;width:1550px;height:25px;background:#c8c8c8;"></div>
<div class="r" style="left:0px;top:837px;width:1550px;height:13px;background:#cce8cf;"></div>
<div class="t" style="top:815px;font-size:15.6px;line-height:20px;color:#000;left:-11px;font-weight:bold;"><span style="font-size:14.8px">净值</span>: 49 058.81 &nbsp;<span style="font-size:14.8px">可用预付款</span>: 49 058.81</div>
<div class="t" style="top:815px;font-size:15.6px;line-height:20px;color:#000;left:1534.5px;font-weight:bold;">00</div>
<svg class="a" role="img" aria-label="指标铺" style="left:0;top:0" width="1550" height="850" fill="#9c9797"><rect x="1425.91" y="809.65" width="6.71" height="31.88" rx=".45"/><rect x="1422.97" y="836.91" width="9.65" height="4.61" rx=".45"/><rect x="1422.13" y="813.42" width="13.00" height="4.61" rx=".45"/><rect x="1437.65" y="809.65" width="6.29" height="31.88" rx=".45"/><rect x="1443.94" y="810.91" width="13.84" height="4.61" rx=".45"/><rect x="1443.94" y="818.46" width="13.84" height="4.19" rx=".45"/><rect x="1443.94" y="825.17" width="13.84" height="3.36" rx=".45"/><rect x="1451.07" y="828.52" width="6.71" height="13.00" rx=".45"/><rect x="1443.94" y="831.46" width="7.13" height="2.94" rx=".45"/><rect x="1443.94" y="837.33" width="13.84" height="4.19" rx=".45"/><rect x="1466.17" y="809.65" width="5.87" height="31.88" rx=".45"/><rect x="1461.14" y="813.42" width="15.94" height="4.61" rx=".45"/><rect x="1477.92" y="810.91" width="16.78" height="4.19" rx=".45"/><rect x="1476.66" y="818.88" width="20.13" height="4.61" rx=".45"/><rect x="1483.37" y="823.49" width="6.71" height="18.04" rx=".45"/><rect x="1476.66" y="826.85" width="5.03" height="14.26" rx=".45"/><rect x="1491.76" y="826.85" width="5.03" height="14.26" rx=".45"/><rect x="1502.25" y="811.74" width="10.49" height="4.61" rx=".45"/><rect x="1501.41" y="818.88" width="11.33" height="4.19" rx=".45"/><rect x="1500.15" y="825.59" width="12.58" height="4.61" rx=".45"/><rect x="1503.93" y="816.36" width="6.29" height="25.17" rx=".45"/><rect x="1503.93" y="836.91" width="8.81" height="4.61" rx=".45"/><rect x="1513.99" y="813.42" width="21.39" height="4.61" rx=".45"/><rect x="1521.54" y="809.65" width="6.29" height="31.88" rx=".45"/><rect x="1530.77" y="809.65" width="3.78" height="3.78" rx=".45"/><rect x="1513.99" y="820.97" width="21.39" height="3.36" rx=".45"/><rect x="1513.99" y="820.97" width="4.61" height="20.55" rx=".45"/><rect x="1530.77" y="820.97" width="4.61" height="20.55" rx=".45"/><rect x="1513.99" y="827.27" width="21.39" height="3.36" rx=".45"/><rect x="1513.99" y="833.56" width="21.39" height="3.36" rx=".45"/><polygon points="1422.13,825.17 1435.13,822.23 1435.13,826.85 1422.13,829.78"/><polygon points="1461.31,839.85 1461.64,831.88 1464.08,822.65 1466.34,818.88 1466.34,833.56 1464.08,837.75"/><polygon points="1500.15,814.26 1502.25,809.65 1506.02,809.65 1506.02,814.26"/><ellipse cx="1474.56" cy="826.85" rx="1.59" ry="7.38"/></svg>
<div class="r" style="left:43px;top:60px;width:672px;height:305px;background:#f0f0f0;box-shadow:inset 0 0 0 1px #fff;"></div>
<div class="r" style="left:43px;top:60px;width:672px;height:37px;background:#fff;"></div>
<div class="a" style="left:54px;top:69px"><svg width="16.6" height="16.6"><use href="#bells" width="16.6" height="16.6"/></svg></div>
<div class="t" style="top:69px;font-size:15px;line-height:20px;color:#999;left:77px;"><span style="font-size:14.8px">警报</span></div>
<div class="t" style="top:69.4px;font-size:17px;line-height:18px;color:#9a9a9a;left:624.3px;transform:scaleX(.74);transform-origin:0 0;">?</div>
<svg class="a" style="left:678px;top:71px" width="14" height="14"><path d="M1 1L13 13M13 1L1 13" stroke="#8a8a8a" stroke-width="1" fill="none"/></svg>
<div class="a" style="left:59px;top:111.6px"><svg width="48" height="48"><use href="#bell" width="48" height="48"/></svg></div>
<div class="t" style="top:116.5px;font-size:13px;line-height:17px;color:#000;left:125.5px;"><span style="letter-spacing:-1.05px">MACD</span> <span style="font-size:14.8px">出现死叉于周期：</span>M5</div>
<div class="t" style="top:133px;font-size:13px;line-height:17px;color:#000;left:129.5px;">Date=2022.01.05 5:34</div>
<div class="t" style="top:148.5px;font-size:13px;line-height:17px;color:#000;left:129.5px;"><span style="font-size:14.8px">交易品种：</span><span style="letter-spacing:-1.05px">XAUUSD</span> <span style="font-size:14.8px">周期</span>=M5</div>
<div class="r" style="left:685px;top:117px;width:1px;height:76px;background:#fafafa;"></div>
<svg class="a" style="left:690px;top:123px" width="12" height="64"><path d="M1 7L5.5 2.5L10 7M1 56L5.5 60.5L10 56" stroke="#bdbdbd" stroke-width="1.7" fill="none"/></svg>
<div class="r" style="left:52px;top:202px;width:654px;height:117px;background:#fff;box-shadow:inset 0 0 0 1px #828790;"></div>
<div class="a" style="left:53px;top:203px;width:631px;height:115px;overflow:hidden;background:#c4c4c4">
<div class="r" style="left:0;top:1px;width:156px;height:24px;background:#b8d4bb"></div>
<div class="r" style="left:157px;top:1px;width:474px;height:24px;background:#b8d4bb"></div>
<div class="a" style="left:5.5px;top:5px"><svg width="16" height="16"><use href="#bells" width="16" height="16"/></svg></div>
<div class="t" style="left:28.5px;top:5px;font-size:13px;line-height:17px;letter-spacing:0.2px">11:35:28</div>
<div class="t" style="left:163.5px;top:5px;font-size:13px;line-height:17px"><span style="letter-spacing:-1.05px">MACD</span> <span style="font-size:14.8px">出现死叉于周期：</span>M5</div>
<div class="r" style="left:0;top:26px;width:156px;height:24px;background:#cce8cf"></div>
<div class="r" style="left:157px;top:26px;width:474px;height:24px;background:#cce8cf"></div>
<div class="a" style="left:5.5px;top:30px"><svg width="16" height="16"><use href="#bells" width="16" height="16"/></svg></div>
<div class="t" style="left:28.5px;top:30px;font-size:13px;line-height:17px;letter-spacing:0.2px">11:35:28</div>
<div class="t" style="left:163.5px;top:30px;font-size:13px;line-height:17px"><span style="letter-spacing:-1.05px">MACD</span> <span style="font-size:14.8px">出现金叉于周期</span>:M5</div>
<div class="r" style="left:0;top:51px;width:156px;height:24px;background:#b8d4bb"></div>
<div class="r" style="left:157px;top:51px;width:474px;height:24px;background:#b8d4bb"></div>
<div class="a" style="left:5.5px;top:55px"><svg width="16" height="16"><use href="#bells" width="16" height="16"/></svg></div>
<div class="t" style="left:28.5px;top:55px;font-size:13px;line-height:17px;letter-spacing:0.2px">11:34:48</div>
<div class="t" style="left:163.5px;top:55px;font-size:13px;line-height:17px"><span style="letter-spacing:-1.05px">MACD</span> <span style="font-size:14.8px">出现死叉于周期：</span>H1</div>
<div class="r" style="left:0;top:76px;width:156px;height:24px;background:#cce8cf"></div>
<div class="r" style="left:157px;top:76px;width:474px;height:24px;background:#cce8cf"></div>
<div class="a" style="left:5.5px;top:80px"><svg width="16" height="16"><use href="#bells" width="16" height="16"/></svg></div>
<div class="t" style="left:28.5px;top:80px;font-size:13px;line-height:17px;letter-spacing:0.2px">11:34:45</div>
<div class="t" style="left:163.5px;top:80px;font-size:13px;line-height:17px"><span style="letter-spacing:-1.05px">MACD</span> <span style="font-size:14.8px">出现金叉于周期</span>:M5</div>
<div class="r" style="left:0;top:101px;width:156px;height:24px;background:#b8d4bb"></div>
<div class="r" style="left:157px;top:101px;width:474px;height:24px;background:#b8d4bb"></div>
<div class="a" style="left:5.5px;top:105px"><svg width="16" height="16"><use href="#bells" width="16" height="16"/></svg></div>
<div class="t" style="left:28.5px;top:105px;font-size:13px;line-height:17px;letter-spacing:0.2px">11:34:44</div>
<div class="t" style="left:163.5px;top:105px;font-size:13px;line-height:17px"><span style="letter-spacing:-1.05px">MACD</span> <span style="font-size:14.8px">出现死叉于周期：</span>M5</div>
</div>
<div class="r" style="left:684px;top:203px;width:21px;height:115px;background:#f0f0f0;"></div>
<div class="r" style="left:684px;top:225px;width:19px;height:24px;background:#cdcdcd;"></div>
<svg class="a" style="left:688px;top:210px" width="12" height="102"><path d="M1 7L5.5 2.5L10 7M1 94L5.5 98.5L10 94" stroke="#505050" stroke-width="1.6" fill="none"/></svg>
<div class="r" style="left:336px;top:329px;width:86px;height:26px;background:#e1e1e1;box-shadow:inset 0 0 0 1px #adadad;"></div>
<div class="t" style="top:334px;font-size:13px;line-height:17px;color:#000;left:371px;"><span style="letter-spacing:-1.2px">OK</span></div>
</div></body></html>
